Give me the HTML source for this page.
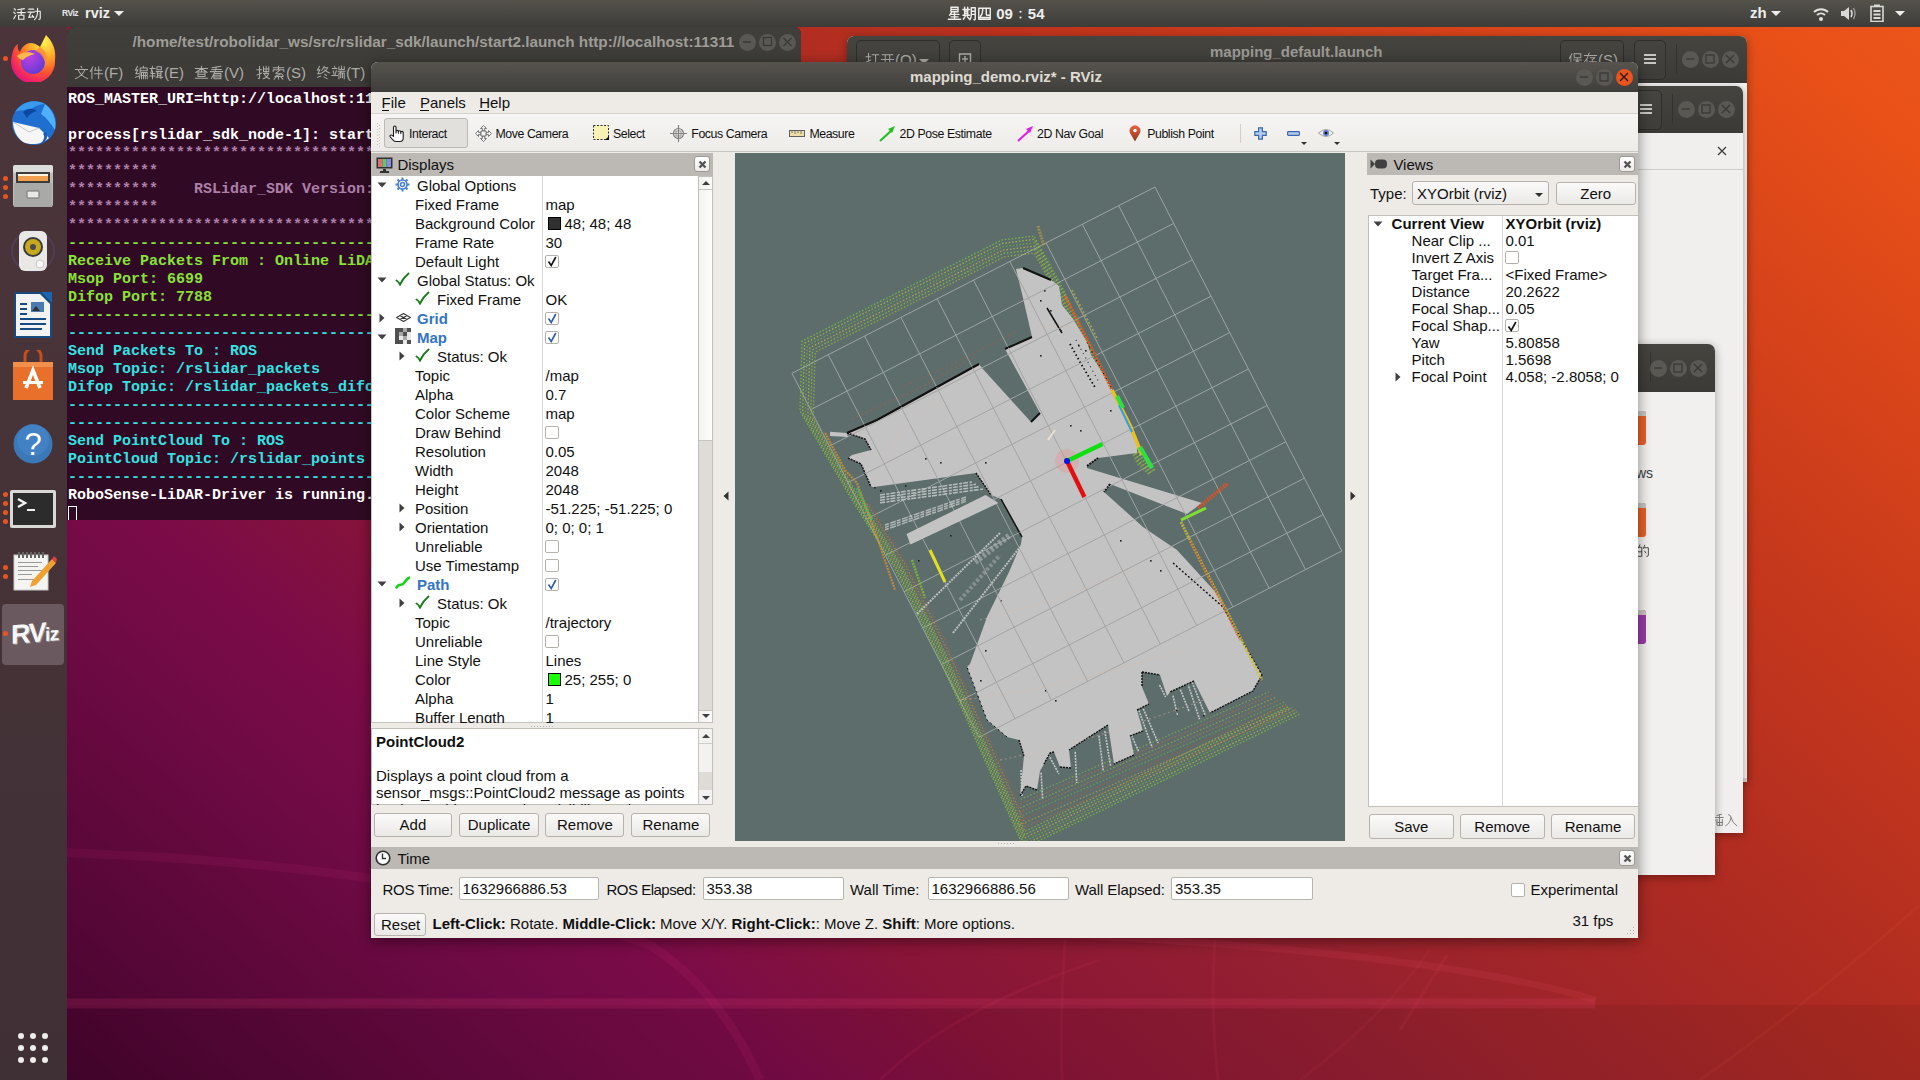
<!DOCTYPE html><html><head><meta charset="utf-8"><style>
*{margin:0;padding:0;box-sizing:border-box}
html,body{width:1920px;height:1080px;overflow:hidden}
body{position:relative;font-family:"Liberation Sans",sans-serif;color:#000;
background:#7a1040}
.a{position:absolute}
.t{position:absolute;white-space:pre;line-height:1}
.wp{position:absolute;left:0;top:0;width:1920px;height:1080px;
background:linear-gradient(41deg,#3e0428 0%,#4a0530 4%,#6e0a44 19%,#7a0b48 25%,#881438 33%,#952030 45%,#ac2a22 60%,#c6381c 75%,#d8441a 85%,#e85018 94%,#ec561a 100%)}
.topbar{position:absolute;left:0;top:0;width:1920px;height:27px;background:linear-gradient(#55524c,#3d3c38);color:#eeeeec;font-size:15px}
.dock{position:absolute;left:0;top:27px;width:67px;height:1053px;background:linear-gradient(#4b353a,#3f3035)}
.dot{position:absolute;width:5px;height:5px;border-radius:50%;background:#e95420}
.term{position:absolute;left:67px;top:27px;width:734px;height:493px;background:#300a24;border-radius:7px 7px 0 0;overflow:hidden}
.termhd{position:absolute;left:0;top:0;width:734px;height:60px;background:linear-gradient(#403f3b,#3b3a36)}
.tl{position:absolute;left:1px;font-family:"Liberation Mono",monospace;font-weight:bold;font-size:15px;line-height:18px;white-space:pre;height:18px}
.wbtn{position:absolute;width:17px;height:17px;border-radius:50%;background:#5a5853}

.bw{position:absolute;background:#f6f5f4;border-radius:7px 7px 0 0;overflow:hidden;box-shadow:0 2px 10px rgba(0,0,0,0.35)}
.bwhd{position:absolute;left:0;top:0;width:100%;background:linear-gradient(#45443f,#3b3a36)}
.gbtn{position:absolute;border:1px solid #2f2e2a;border-radius:5px;background:linear-gradient(#45443f,#3e3d39)}
.cbtn{position:absolute;width:17px;height:17px;border-radius:50%;background:#5a5853}
.rv{position:absolute;left:371px;top:62px;width:1267px;height:876px;background:#eeebe7;border-radius:7px 7px 0 0;overflow:hidden;box-shadow:0 3px 14px rgba(0,0,0,0.45)}
.rvtitle{position:absolute;left:0;top:0;width:1267px;height:30px;background:linear-gradient(#57544f,#3f3e3a)}
.ui{font-size:15px;color:#101010}

.pb{position:absolute;border:1px solid #b6b2ad;border-radius:3px;background:linear-gradient(#fbfaf9,#e9e7e4);font-size:15px;text-align:center;color:#101010}
.hdr{position:absolute;background:#bcb8b3}
.xb{position:absolute;width:17px;height:17px;border:1px solid #9d9994;border-radius:3px;background:linear-gradient(#ffffff,#ecebe9)}
.cb{position:absolute;width:14px;height:14px;border:1px solid #b4b0ab;border-radius:2px;background:#fff}
.sbbtn{position:absolute;background:linear-gradient(90deg,#f3f2f0,#fdfdfc)}
.inp{position:absolute;border:1px solid #b8b4af;border-radius:2px;background:#fff;font-size:15px;color:#101010}
</style></head><body>
<div class="wp"></div>
<div class="a" style="left:0;top:1005px;width:1920px;height:75px;background:rgba(0,0,0,0.07)"></div>
<svg class="a" style="left:0;top:0" width="1920" height="1080" viewBox="0 0 1920 1080"><path d="M67 1003.5 H1595" stroke="rgba(255,80,130,0.14)" stroke-width="10" fill="none"/><path d="M1000 932 Q1420 948 1596 1000" stroke="rgba(255,90,120,0.10)" stroke-width="7" fill="none"/><path d="M40 852 Q420 862 650 945 Q720 990 760 1080" stroke="rgba(255,60,150,0.08)" stroke-width="9" fill="none"/><path d="M1447 955 L1400 1030" stroke="rgba(255,90,120,0.08)" stroke-width="3" fill="none"/><path d="M1920 905 Q1800 1010 1700 1080" stroke="rgba(255,120,80,0.07)" stroke-width="3" fill="none"/><path d="M1065 940 Q1060 1010 1062 1080" stroke="rgba(255,90,120,0.07)" stroke-width="3" fill="none"/><path d="M1215 940 Q1210 1010 1218 1080" stroke="rgba(255,90,120,0.07)" stroke-width="3" fill="none"/><path d="M880 1080 Q950 1010 1100 960" stroke="rgba(255,90,120,0.07)" stroke-width="3" fill="none"/><path d="M1430 950 Q1380 1020 1300 1080" stroke="rgba(255,90,120,0.06)" stroke-width="3" fill="none"/></svg>
<div class="topbar">
<div class="t" style="left:12px;top:6px;font-size:15px"><svg width="15" height="15" viewBox="-0.5 -0.5 17 17" style="display:inline-block;vertical-align:-2.10px"><path d="M2 2.5 L3.5 4 M1.5 6.5 L3 8 M1.5 14 L3.8 10 M6 3.8 L13.5 2.5 M5.5 7 H14.5 M10 3 V9.5 M7 10 H13 V14.5 H7 Z" stroke="#eeeeec" stroke-width="1.3" fill="none" stroke-linecap="round" stroke-linejoin="round"/></svg><svg width="15" height="15" viewBox="-0.5 -0.5 17 17" style="display:inline-block;vertical-align:-2.10px"><path d="M1.5 3 H7 M0.5 6.5 H7.5 M4 6.5 L1.5 12.5 L7 11.5 M5.5 10 L7 12.5 M8.5 5.5 H14.5 V13 Q14.5 14.8 12.8 14.5 M11.5 2 V6 Q11.3 12 8 15" stroke="#eeeeec" stroke-width="1.3" fill="none" stroke-linecap="round" stroke-linejoin="round"/></svg></div>
<div class="t" style="left:62px;top:9px;font-size:8.5px;font-weight:bold;color:#e8e8e8;letter-spacing:-0.5px">RViz</div>
<div class="t" style="left:85px;top:6px;font-size:14.5px;font-weight:bold">rviz</div>
<div class="a" style="left:114px;top:11px;width:0;height:0;border-left:5px solid transparent;border-right:5px solid transparent;border-top:5px solid #eeeeec"></div>
<div class="t" style="left:947px;top:6px;font-size:15px;font-weight:bold"><svg width="15" height="15" viewBox="-0.5 -0.5 17 17" style="display:inline-block;vertical-align:-2.10px"><path d="M4 1 H12 V6 H4 Z M4 3.5 H12 M4.5 7 L2.5 10 M3.5 9 H13 M8 7 V14.5 M4 11.8 H12 M1 14.5 H15" stroke="#eeeeec" stroke-width="1.6" fill="none" stroke-linecap="round" stroke-linejoin="round"/></svg><svg width="15" height="15" viewBox="-0.5 -0.5 17 17" style="display:inline-block;vertical-align:-2.10px"><path d="M0.5 3.5 H8 M2.5 1 V10 M6 1 V10 M2.5 5.5 H6 M2.5 7.8 H6 M0.5 10 H8 M3 11.5 L1 14.5 M5.5 11.5 L7.5 14 M10 1.5 H14.5 V14 Q14.5 15.5 13 15 M10 1.5 V9 Q10 13 8.5 15 M10 5.5 H14.5 M10 9 H14.5" stroke="#eeeeec" stroke-width="1.6" fill="none" stroke-linecap="round" stroke-linejoin="round"/></svg><svg width="15" height="15" viewBox="-0.5 -0.5 17 17" style="display:inline-block;vertical-align:-2.10px"><path d="M1.5 2 H14.5 V14.5 H1.5 Z M6 2 Q6 9 3.5 11 M10 2 V9 Q10 10 11.5 10 H14.5 M1.5 12.5 H14.5" stroke="#eeeeec" stroke-width="1.6" fill="none" stroke-linecap="round" stroke-linejoin="round"/></svg> 09<svg width="15" height="15" viewBox="-0.5 -0.5 17 17" style="display:inline-block;vertical-align:-2.10px"><circle cx="8" cy="6" r="1.2" fill="#eeeeec"/><circle cx="8" cy="12.5" r="1.2" fill="#eeeeec"/></svg>54</div>
<div class="t" style="left:1750px;top:5px;font-size:15px;font-weight:bold">zh</div>
<div class="a" style="left:1771px;top:11px;width:0;height:0;border-left:5px solid transparent;border-right:5px solid transparent;border-top:5px solid #eeeeec"></div>
<svg class="a" style="left:1813px;top:6px" width="16" height="16" viewBox="0 0 16 16"><path d="M1 6 A10 10 0 0 1 15 6" stroke="#e0e0de" stroke-width="2" fill="none"/><path d="M4 9 A6 6 0 0 1 12 9" stroke="#e0e0de" stroke-width="2" fill="none"/><circle cx="8" cy="13" r="2" fill="#e0e0de"/></svg>
<svg class="a" style="left:1840px;top:6px" width="17" height="15" viewBox="0 0 17 15"><path d="M1 5h3l5-4v13l-5-4H1z" fill="#d8d8d6"/><path d="M11 4 Q13 7.5 11 11" stroke="#d8d8d6" stroke-width="1.6" fill="none"/><path d="M13.5 2 Q16.5 7.5 13.5 13" stroke="#9a9a98" stroke-width="1.4" fill="none"/></svg>
<svg class="a" style="left:1870px;top:4px" width="14" height="18" viewBox="0 0 14 18"><rect x="4" y="0.5" width="6" height="2" fill="#d8d8d6"/><rect x="1" y="2.5" width="12" height="15" fill="none" stroke="#d8d8d6" stroke-width="1.6"/><rect x="3.5" y="6" width="7" height="2" fill="#d8d8d6"/><rect x="3.5" y="9.5" width="7" height="2" fill="#d8d8d6"/><rect x="3.5" y="13" width="7" height="2" fill="#d8d8d6"/></svg>
<div class="a" style="left:1895px;top:11px;width:0;height:0;border-left:5px solid transparent;border-right:5px solid transparent;border-top:5px solid #eeeeec"></div>
</div>
<div class="dock"></div>
<svg class="a" style="left:9px;top:34px" width="48" height="48" viewBox="0 0 48 48">
<defs><radialGradient id="ffo" cx="0.75" cy="0.15" r="1"><stop offset="0" stop-color="#fff44f"/><stop offset="0.3" stop-color="#ffb02a"/><stop offset="0.6" stop-color="#ff5a2a"/><stop offset="0.85" stop-color="#f0206a"/><stop offset="1" stop-color="#d01a8a"/></radialGradient>
<radialGradient id="ffp" cx="0.35" cy="0.3" r="0.8"><stop offset="0" stop-color="#c040e0"/><stop offset="1" stop-color="#5a3bd6"/></radialGradient></defs>
<path d="M37 1 C45 9 47 17 46 26 A22 22 0 1 1 3 21 C4 15 6 12 9 10 C8 14 9 16 11 18 C13 12 18 9 22 9 C26 9 30 12 31 13 C33 9 35 5 37 1 Z" fill="url(#ffo)"/>
<circle cx="24" cy="28" r="12" fill="url(#ffp)"/>
<path d="M8 22 C12 18 20 17 26 20 C22 21 18 22 14 26 C11 25 9 24 8 22Z" fill="#ffb84a"/>
<path d="M31 13 C38 17 40 25 37 32 C35 24 32 19 26 17Z" fill="#ff8a3a" opacity="0.8"/>
</svg>
<svg class="a" style="left:9px;top:98px" width="48" height="49" viewBox="0 0 48 49">
<circle cx="25" cy="25" r="22" fill="#1f6fd0"/>
<path d="M6 14 C12 4 26 0 36 6 C30 6 24 9 20 13 C16 12 10 12 6 14Z" fill="#3a9af0"/>
<path d="M36 6 C44 12 48 22 46 32 C42 26 38 20 32 16Z" fill="#50b0ff"/>
<path d="M14 14 C18 10 24 10 28 13 C24 14 20 16 18 20Z" fill="#0a4aa0"/>
<path d="M4 24 L30 30 L40 40 C34 46 22 48 14 44 C8 40 4 32 4 24Z" fill="#f6f6f6"/>
<path d="M4 24 L20 34 L30 30" stroke="#c8c8c8" stroke-width="1" fill="none"/>
<path d="M36 34 C40 38 38 44 30 47 C36 42 36 38 34 36Z" fill="#1a5ab8"/>
</svg>
<svg class="a" style="left:12px;top:164px" width="42" height="44" viewBox="0 0 42 44">
<rect x="1" y="1" width="40" height="42" rx="3" fill="#bdbdbb"/><rect x="1" y="1" width="40" height="8" rx="2" fill="#dcdcda"/>
<rect x="4" y="8" width="34" height="11" fill="#3c3c3a"/><rect x="6" y="10" width="30" height="7" fill="#f0a050"/><rect x="6" y="10" width="30" height="2" fill="#fff2dc"/>
<rect x="2" y="19" width="38" height="24" fill="#a9a9a7"/><rect x="15" y="27" width="12" height="7" rx="1" fill="#e8e8e6" stroke="#707070" stroke-width="1"/>
</svg>
<svg class="a" style="left:10px;top:228px" width="46" height="46" viewBox="0 0 46 46">
<ellipse cx="23" cy="23" rx="21" ry="20" fill="none" stroke="#55456a" stroke-width="2" opacity="0.6"/>
<rect x="9" y="3" width="28" height="40" rx="6" fill="#e8e8e6"/><circle cx="23" cy="19" r="10" fill="#3a3a3a"/><circle cx="23" cy="19" r="8" fill="#c8a820"/><circle cx="23" cy="19" r="3" fill="#4a4a4a"/>
<circle cx="30" cy="36" r="4" fill="#f8f8f8" stroke="#c8c8c8"/>
</svg>
<svg class="a" style="left:13px;top:291px" width="40" height="48" viewBox="0 0 40 48">
<path d="M1 1 H28 L39 12 V47 H1 Z" fill="#174a7e"/><path d="M3 3 H27 L37 13 V45 H3 Z" fill="#f2f2f2"/><path d="M28 1 L39 1 L39 12 Z" fill="#1a65b0"/>
<rect x="7" y="12" width="7" height="2" fill="#174a7e"/><rect x="7" y="17" width="7" height="2" fill="#174a7e"/><rect x="7" y="22" width="7" height="2" fill="#174a7e"/>
<rect x="18" y="11" width="13" height="10" fill="#4a7ab0"/><path d="M19 20 L23 15 L27 20Z" fill="#333"/>
<rect x="7" y="27" width="26" height="2" fill="#174a7e"/><rect x="7" y="32" width="26" height="2" fill="#174a7e"/><rect x="7" y="37" width="22" height="2" fill="#174a7e"/>
</svg>
<svg class="a" style="left:12px;top:350px" width="42" height="51" viewBox="0 0 42 51">
<path d="M13 12 V6 A8 8 0 0 1 29 6 V12" stroke="#c84f1a" stroke-width="3" fill="none"/>
<rect x="1" y="12" width="40" height="38" fill="#e8702a"/><rect x="1" y="12" width="40" height="5" fill="#f0904a"/>
<path d="M14 38 L21 20 L28 38" stroke="#fff" stroke-width="3.5" fill="none"/><rect x="11" y="31" width="20" height="3" fill="#fff"/>
</svg>
<svg class="a" style="left:13px;top:424px" width="40" height="40" viewBox="0 0 40 40">
<circle cx="20" cy="20" r="19.5" fill="#3a78b8"/><circle cx="20" cy="16" r="16" fill="#4a8ad0" opacity="0.5"/>
<text x="20" y="31" text-anchor="middle" font-family="Liberation Sans" font-size="31" fill="#fff">?</text>
</svg>
<svg class="a" style="left:10px;top:490px" width="46" height="38" viewBox="0 0 46 38">
<rect x="0" y="0" width="46" height="38" rx="2" fill="#d8d8d6"/><rect x="3" y="3" width="40" height="32" fill="#2c2c2c"/>
<path d="M8 9 L15 13 L8 17" stroke="#f0f0f0" stroke-width="2.5" fill="none"/><rect x="17" y="19" width="8" height="2" fill="#f0f0f0"/>
</svg>
<svg class="a" style="left:12px;top:551px" width="46" height="40" viewBox="0 0 46 40">
<rect x="2" y="4" width="34" height="35" fill="#f4f4f2" stroke="#c8c8c6"/>
<g fill="#666"><rect x="6" y="1" width="2" height="6"/><rect x="10" y="1" width="2" height="6"/><rect x="14" y="1" width="2" height="6"/><rect x="18" y="1" width="2" height="6"/><rect x="22" y="1" width="2" height="6"/><rect x="26" y="1" width="2" height="6"/><rect x="30" y="1" width="2" height="6"/></g>
<g fill="#9a9a9a"><rect x="6" y="11" width="24" height="1"/><rect x="6" y="15" width="20" height="1"/><rect x="6" y="19" width="24" height="1"/><rect x="6" y="23" width="14" height="1"/><rect x="6" y="28" width="18" height="1"/></g>
<path d="M20 30 L40 8 L44 12 L24 34 L18 36Z" fill="#f0a030"/><path d="M40 8 L44 12 L45 8 L42 5Z" fill="#e04040"/>
</svg>
<div class="a" style="left:2px;top:604px;width:62px;height:61px;border-radius:4px;background:#6a5a60"></div>
<div class="t" style="left:11px;top:620px;font-size:27px;font-weight:bold;color:#f6f6f6;letter-spacing:-1.5px;text-shadow:1px 1px 0 #9a9a9a;transform:skewY(-5deg)">RV<span style="font-size:19px;letter-spacing:-0.5px">iz</span></div>
<div class="dot" style="left:3px;top:56px"></div>
<div class="dot" style="left:3px;top:176px"></div>
<div class="dot" style="left:3px;top:185px"></div>
<div class="dot" style="left:3px;top:194px"></div>
<div class="dot" style="left:3px;top:492px"></div>
<div class="dot" style="left:3px;top:501px"></div>
<div class="dot" style="left:3px;top:510px"></div>
<div class="dot" style="left:3px;top:519px"></div>
<div class="dot" style="left:3px;top:565px"></div>
<div class="dot" style="left:3px;top:574px"></div>
<div class="dot" style="left:3px;top:631px"></div>
<div class="a" style="left:17.75px;top:1032.75px;width:6.5px;height:6.5px;border-radius:50%;background:#eeeeec"></div>
<div class="a" style="left:29.75px;top:1032.75px;width:6.5px;height:6.5px;border-radius:50%;background:#eeeeec"></div>
<div class="a" style="left:41.75px;top:1032.75px;width:6.5px;height:6.5px;border-radius:50%;background:#eeeeec"></div>
<div class="a" style="left:17.75px;top:1044.75px;width:6.5px;height:6.5px;border-radius:50%;background:#eeeeec"></div>
<div class="a" style="left:29.75px;top:1044.75px;width:6.5px;height:6.5px;border-radius:50%;background:#eeeeec"></div>
<div class="a" style="left:41.75px;top:1044.75px;width:6.5px;height:6.5px;border-radius:50%;background:#eeeeec"></div>
<div class="a" style="left:17.75px;top:1056.75px;width:6.5px;height:6.5px;border-radius:50%;background:#eeeeec"></div>
<div class="a" style="left:29.75px;top:1056.75px;width:6.5px;height:6.5px;border-radius:50%;background:#eeeeec"></div>
<div class="a" style="left:41.75px;top:1056.75px;width:6.5px;height:6.5px;border-radius:50%;background:#eeeeec"></div>
<div class="term">
<div class="termhd"></div>
<div class="t" style="left:65.5px;top:7px;font-size:15.3px;font-weight:bold;color:#9e9c96">/home/test/robolidar_ws/src/rslidar_sdk/launch/start2.launch http://localhost:11311</div>
<div class="wbtn" style="left:671.5px;top:6.5px"></div>
<div class="wbtn" style="left:691.5px;top:6.5px"></div>
<div class="wbtn" style="left:711.5px;top:6.5px"></div>
<svg class="a" style="left:671px;top:6px" width="60" height="18"><path d="M5 9h8" stroke="#3a3935" stroke-width="1.3"/><rect x="25.5" y="4.5" width="8" height="8" fill="none" stroke="#3a3935" stroke-width="1.3"/><path d="M45.5 5l8 8M53.5 5l-8 8" stroke="#3a3935" stroke-width="1.3"/></svg>
<div class="t" style="left:7px;top:38px;font-size:15px;color:#aeaca6"><svg width="15" height="15" viewBox="-0.5 -0.5 17 17" style="display:inline-block;vertical-align:-2.10px"><path d="M7.5 1 L8.5 3 M1 4.5 H15 M4 4.5 Q7 12 15 15 M12 4.5 Q9 12 1 15" stroke="#aeaca6" stroke-width="1.15" fill="none" stroke-linecap="round" stroke-linejoin="round"/></svg><svg width="15" height="15" viewBox="-0.5 -0.5 17 17" style="display:inline-block;vertical-align:-2.10px"><path d="M4 1.5 L1 7 M2.8 4.5 V15 M7 2.5 L6 6 M6.5 5.5 H14 M5.5 9.5 H15 M10.5 1.5 V15" stroke="#aeaca6" stroke-width="1.15" fill="none" stroke-linecap="round" stroke-linejoin="round"/></svg>(F)</div>
<div class="t" style="left:67px;top:38px;font-size:15px;color:#aeaca6"><svg width="15" height="15" viewBox="-0.5 -0.5 17 17" style="display:inline-block;vertical-align:-2.10px"><path d="M3.5 1 L1 5.5 L4 5 L1.5 9.5 L5 9 M1 13.5 L5 12 M10 1 L10.5 2 M6.5 3 H14.5 V6 H6.5 M6.5 3 V8 Q6.5 13 5.5 15 M8 8 H14.5 V15 M8 8 V15 M10.2 8 V15 M12.3 8 V15 M8 11.5 H14.5" stroke="#aeaca6" stroke-width="1.15" fill="none" stroke-linecap="round" stroke-linejoin="round"/></svg><svg width="15" height="15" viewBox="-0.5 -0.5 17 17" style="display:inline-block;vertical-align:-2.10px"><path d="M0.5 3.5 H6.5 M3.5 1 L1.5 9 H6.5 M3.5 6 V15 M0.5 12 H6.5 M8.5 1.5 H13.5 V5 H8.5 Z M7.5 7 H15 M9 7 V13.5 M13 7 V15 M9 9.5 H13 M9 11.5 H13 M7.5 13.5 H15" stroke="#aeaca6" stroke-width="1.15" fill="none" stroke-linecap="round" stroke-linejoin="round"/></svg>(E)</div>
<div class="t" style="left:127px;top:38px;font-size:15px;color:#aeaca6"><svg width="15" height="15" viewBox="-0.5 -0.5 17 17" style="display:inline-block;vertical-align:-2.10px"><path d="M1 3.5 H15 M8 1 V7.5 M8 3.5 L1.5 8 M8 3.5 L14.5 8 M4 7.5 H12 V12.5 H4 Z M4 10 H12 M1 14.5 H15" stroke="#aeaca6" stroke-width="1.15" fill="none" stroke-linecap="round" stroke-linejoin="round"/></svg><svg width="15" height="15" viewBox="-0.5 -0.5 17 17" style="display:inline-block;vertical-align:-2.10px"><path d="M13 1 L3 2.5 M2.5 4.5 H13.5 M1 7 H15 M8 2 Q6 9 2 15 M5 9 H13 V15 H5 Z M5 11 H13 M5 13 H13" stroke="#aeaca6" stroke-width="1.15" fill="none" stroke-linecap="round" stroke-linejoin="round"/></svg>(V)</div>
<div class="t" style="left:189px;top:38px;font-size:15px;color:#aeaca6"><svg width="15" height="15" viewBox="-0.5 -0.5 17 17" style="display:inline-block;vertical-align:-2.10px"><path d="M0.5 5 H6 M3.5 1 V14 Q3.5 15.3 2 14.5 M0.5 11 L6 8.5 M8 1.5 V7 H14 V1.5 M8 4 H14 M11 1 V8 M8 9 H14 Q12 14 7.5 15 M9 10 Q11 14 15 15" stroke="#aeaca6" stroke-width="1.15" fill="none" stroke-linecap="round" stroke-linejoin="round"/></svg><svg width="15" height="15" viewBox="-0.5 -0.5 17 17" style="display:inline-block;vertical-align:-2.10px"><path d="M2 2.5 H14 M8 0.5 V5 M2 7 V5 H14 V7 M9 5.5 L5 9 L11 9.5 L4 12.5 H13 M12 10 L13.5 12 M8 12.5 V15.5 M5 13.5 L3 15.5 M11 13.5 L13 15.5" stroke="#aeaca6" stroke-width="1.15" fill="none" stroke-linecap="round" stroke-linejoin="round"/></svg>(S)</div>
<div class="t" style="left:249px;top:38px;font-size:15px;color:#aeaca6"><svg width="15" height="15" viewBox="-0.5 -0.5 17 17" style="display:inline-block;vertical-align:-2.10px"><path d="M3.5 1 L1 5.5 L4 5 L1.5 9.5 L5 9 M1 13.5 L5 12 M9 1 L6 5.5 M8.5 2.5 H13 Q11 6.5 6 8.5 M9.5 5 Q12 7.5 15 8.5 M9.5 10 L11.5 11.5 M8.5 13 L12 15" stroke="#aeaca6" stroke-width="1.15" fill="none" stroke-linecap="round" stroke-linejoin="round"/></svg><svg width="15" height="15" viewBox="-0.5 -0.5 17 17" style="display:inline-block;vertical-align:-2.10px"><path d="M3.5 1 L4 2.5 M1 3.5 H6.5 M2 6 L3 10 M5.5 5.5 L4.5 10 M0.5 11.5 H7 M8.5 1.5 V4.5 H14.5 V1.5 M11.5 0.5 V4.5 M7.5 6.5 H15.5 M11 6.5 L10 8.5 M8.5 8.5 V15 M8.5 8.5 H14.5 V15 M10.5 8.5 V14 M12.5 8.5 V14" stroke="#aeaca6" stroke-width="1.15" fill="none" stroke-linecap="round" stroke-linejoin="round"/></svg>(T)</div>
<div class="tl" style="top:64px"><span style="color:#ffffff">ROS_MASTER_URI=http://localhost:11311</span></div>
<div class="tl" style="top:82px"></div>
<div class="tl" style="top:100px"><span style="color:#ffffff">process[rslidar_sdk_node-1]: started with pid [8612]</span></div>
<div class="tl" style="top:118px"><span style="color:#ad7fa8">********************************************************************************</span></div>
<div class="tl" style="top:136px"><span style="color:#ad7fa8">**********</span></div>
<div class="tl" style="top:154px"><span style="color:#ad7fa8">**********    RSLidar_SDK Version: v1.3.0</span></div>
<div class="tl" style="top:172px"><span style="color:#ad7fa8">**********</span></div>
<div class="tl" style="top:190px"><span style="color:#ad7fa8">********************************************************************************</span></div>
<div class="tl" style="top:208px"><span style="color:#8ae234">--------------------------------------------------------------------------------</span></div>
<div class="tl" style="top:226px"><span style="color:#8ae234">Receive Packets From : Online LiDAR</span></div>
<div class="tl" style="top:244px"><span style="color:#8ae234">Msop Port: 6699</span></div>
<div class="tl" style="top:262px"><span style="color:#8ae234">Difop Port: 7788</span></div>
<div class="tl" style="top:280px"><span style="color:#8ae234">--------------------------------------------------------------------------------</span></div>
<div class="tl" style="top:298px"><span style="color:#34e2e2">--------------------------------------------------------------------------------</span></div>
<div class="tl" style="top:316px"><span style="color:#34e2e2">Send Packets To : ROS</span></div>
<div class="tl" style="top:334px"><span style="color:#34e2e2">Msop Topic: /rslidar_packets</span></div>
<div class="tl" style="top:352px"><span style="color:#34e2e2">Difop Topic: /rslidar_packets_difop</span></div>
<div class="tl" style="top:370px"><span style="color:#34e2e2">--------------------------------------------------------------------------------</span></div>
<div class="tl" style="top:388px"><span style="color:#34e2e2">--------------------------------------------------------------------------------</span></div>
<div class="tl" style="top:406px"><span style="color:#34e2e2">Send PointCloud To : ROS</span></div>
<div class="tl" style="top:424px"><span style="color:#34e2e2">PointCloud Topic: /rslidar_points</span></div>
<div class="tl" style="top:442px"><span style="color:#34e2e2">--------------------------------------------------------------------------------</span></div>
<div class="tl" style="top:460px"><span style="color:#ffffff">RoboSense-LiDAR-Driver is running.</span></div>
<div class="a" style="left:1px;top:479px;width:9px;height:18px;border:1px solid #fff"></div>
</div>
<div class="bw" style="left:847px;top:36px;width:900px;height:746px">
<div class="bwhd" style="height:47px"></div>
<div class="gbtn" style="left:9px;top:4px;width:84px;height:40px"></div>
<div class="t" style="left:18px;top:16px;font-size:15px;color:#aeaca6"><svg width="15" height="15" viewBox="-0.5 -0.5 17 17" style="display:inline-block;vertical-align:-2.10px"><path d="M0.5 5 H6 M3.5 1 V14 Q3.5 15.3 2 14.5 M0.5 11 L6 8.5 M7.5 2.5 H15 M11.5 2.5 V14 Q11.5 15.5 9.5 14.5" stroke="#aeaca6" stroke-width="1.15" fill="none" stroke-linecap="round" stroke-linejoin="round"/></svg><svg width="15" height="15" viewBox="-0.5 -0.5 17 17" style="display:inline-block;vertical-align:-2.10px"><path d="M2 2.5 H14 M1 8 H15 M5.5 2.5 V8 Q5.5 13 2 15 M10.5 2.5 V15" stroke="#aeaca6" stroke-width="1.15" fill="none" stroke-linecap="round" stroke-linejoin="round"/></svg>(O)</div>
<div class="gbtn" style="left:102px;top:4px;width:32px;height:40px"></div>
<div class="a" style="left:72px;top:23px;width:0;height:0;border-left:5px solid transparent;border-right:5px solid transparent;border-top:5px solid #aeaca6"></div>
<svg class="a" style="left:111px;top:16px" width="14" height="12"><path d="M1.5 11 V2 H12.5 V11" stroke="#aeaca6" stroke-width="1.4" fill="none"/><path d="M7 4 V10 M4 7 H10" stroke="#aeaca6" stroke-width="1.4"/></svg>
<div class="t" style="left:363px;top:8px;font-size:15px;font-weight:bold;color:#9c9a94">mapping_default.launch</div>
<div class="gbtn" style="left:713px;top:4px;width:64px;height:40px"></div>
<div class="t" style="left:721px;top:16px;font-size:15px;color:#aeaca6"><svg width="15" height="15" viewBox="-0.5 -0.5 17 17" style="display:inline-block;vertical-align:-2.10px"><path d="M4 1.5 L1 7 M2.8 4.5 V15 M6.5 1.5 H14 V6 H6.5 Z M5.5 8.5 H15 M10 6 V15.5 M10 9 L5.5 14 M10 9 L15 14" stroke="#aeaca6" stroke-width="1.15" fill="none" stroke-linecap="round" stroke-linejoin="round"/></svg><svg width="15" height="15" viewBox="-0.5 -0.5 17 17" style="display:inline-block;vertical-align:-2.10px"><path d="M1 3.5 H15 M6.5 0.5 Q5 7 1 11 M4 7.5 V15.5 M7.5 6 H13 L10 8.5 V14 Q10 15.5 8.5 15 M6.5 10.5 H15" stroke="#aeaca6" stroke-width="1.15" fill="none" stroke-linecap="round" stroke-linejoin="round"/></svg>(S)</div>
<div class="gbtn" style="left:787px;top:4px;width:32px;height:40px"></div>
<svg class="a" style="left:797px;top:17px" width="12" height="12"><rect y="1" width="12" height="2" fill="#c8c6c0"/><rect y="5" width="12" height="2" fill="#c8c6c0"/><rect y="9" width="12" height="2" fill="#c8c6c0"/></svg>
<div class="a" style="left:829px;top:8px;width:1px;height:30px;background:#33322e"></div>
<div class="a" style="left:0;top:742px;width:100%;height:4px;background:#d8d6d2"></div>
</div>
<div class="cbtn" style="left:1681.5px;top:50.5px;background:#5a5853"></div>
<div class="cbtn" style="left:1701.5px;top:50.5px;background:#5a5853"></div>
<div class="cbtn" style="left:1721.5px;top:50.5px;background:#5a5853"></div>
<svg class="a" style="left:1680px;top:50px" width="60" height="18"><path d="M6 9h8" stroke="#3a3935" stroke-width="1.3"/><rect x="26" y="5" width="8" height="8" fill="none" stroke="#3a3935" stroke-width="1.3"/><path d="M46 5l8 8M54 5l-8 8" stroke="#3a3935" stroke-width="1.4"/></svg>
<div class="bw" style="left:1290px;top:86px;width:453px;height:747px;background:#f0efee">
<div class="bwhd" style="height:47px"></div>
<div class="gbtn" style="left:340px;top:4px;width:32px;height:40px"></div>
<svg class="a" style="left:350px;top:17px" width="12" height="12"><rect y="1" width="12" height="2" fill="#c8c6c0"/><rect y="5" width="12" height="2" fill="#c8c6c0"/><rect y="9" width="12" height="2" fill="#c8c6c0"/></svg>
<div class="a" style="left:382px;top:8px;width:1px;height:30px;background:#33322e"></div>
<div class="a" style="left:0;top:83px;width:100%;height:1px;background:#cfcdca"></div>
<svg class="a" style="left:427px;top:60px" width="10" height="10"><path d="M1 1l8 8M9 1l-8 8" stroke="#3c3c3c" stroke-width="1.3"/></svg>
<div class="t" style="left:420px;top:727px;font-size:14px;color:#777"><svg width="14" height="14" viewBox="-0.5 -0.5 17 17" style="display:inline-block;vertical-align:-1.96px"><path d="M0.5 5 H6 M3.5 1 V14 Q3.5 15.3 2 14.5 M0.5 11 L6 8.5 M13.5 1 L8 2.5 M7 5 H15.5 M11 2 V15 M8 7.5 V14.5 H14.5 V7.5 M8 11 H10.5 M11.5 11 H14.5" stroke="#777" stroke-width="1.1" fill="none" stroke-linecap="round" stroke-linejoin="round"/></svg><svg width="14" height="14" viewBox="-0.5 -0.5 17 17" style="display:inline-block;vertical-align:-1.96px"><path d="M5 1.5 Q8 2 8 5 Q7 12 1.5 15 M8 5 Q10 12 15 15" stroke="#777" stroke-width="1.1" fill="none" stroke-linecap="round" stroke-linejoin="round"/></svg></div>
</div>
<div class="cbtn" style="left:1677.5px;top:100.5px;background:#5a5853"></div>
<div class="cbtn" style="left:1697.5px;top:100.5px;background:#5a5853"></div>
<div class="cbtn" style="left:1717.5px;top:100.5px;background:#5a5853"></div>
<svg class="a" style="left:1676px;top:100px" width="60" height="18"><path d="M6 9h8" stroke="#3a3935" stroke-width="1.3"/><rect x="26" y="5" width="8" height="8" fill="none" stroke="#3a3935" stroke-width="1.3"/><path d="M46 5l8 8M54 5l-8 8" stroke="#3a3935" stroke-width="1.4"/></svg>
<div class="bw" style="left:1300px;top:344px;width:415px;height:531px;background:#f1f0ef">
<div class="bwhd" style="height:48px"></div>
<div class="a" style="left:350px;top:8px;width:1px;height:30px;background:#33322e"></div>
<div class="a" style="left:310px;top:67px;width:36px;height:34px;border-radius:3px;background:#e8602a"></div>
<div class="a" style="left:310px;top:67px;width:36px;height:5px;border-radius:3px 3px 0 0;background:#c8c6c0"></div>
<div class="a" style="left:310px;top:159px;width:36px;height:34px;border-radius:3px;background:#e8602a"></div>
<div class="a" style="left:310px;top:159px;width:36px;height:5px;border-radius:3px 3px 0 0;background:#c8c6c0"></div>
<div class="a" style="left:310px;top:266px;width:36px;height:34px;border-radius:3px;background:#9a3aa8"></div>
<div class="a" style="left:310px;top:266px;width:36px;height:5px;border-radius:3px 3px 0 0;background:#c8c6c0"></div>
<div class="t" style="left:336px;top:122px;font-size:14px;color:#3c3c3c">ws</div>
<div class="t" style="left:336px;top:200px;font-size:14px;color:#3c3c3c"><svg width="14" height="14" viewBox="-0.5 -0.5 17 17" style="display:inline-block;vertical-align:-1.96px"><path d="M4.2 0.5 L3.2 3 M1.5 3.5 H6.5 V14.5 H1.5 Z M1.5 9 H6.5 M10 1 L8.5 5 M9.5 4 H14.5 V13 Q14.5 15.2 12.5 14.5 M10 8 L11.5 10.5" stroke="#3c3c3c" stroke-width="1.1" fill="none" stroke-linecap="round" stroke-linejoin="round"/></svg></div>
</div>
<div class="cbtn" style="left:1649.5px;top:359.5px;background:#5a5853"></div>
<div class="cbtn" style="left:1669.5px;top:359.5px;background:#5a5853"></div>
<div class="cbtn" style="left:1689.5px;top:359.5px;background:#5a5853"></div>
<svg class="a" style="left:1648px;top:359px" width="60" height="18"><path d="M6 9h8" stroke="#3a3935" stroke-width="1.3"/><rect x="26" y="5" width="8" height="8" fill="none" stroke="#3a3935" stroke-width="1.3"/><path d="M46 5l8 8M54 5l-8 8" stroke="#3a3935" stroke-width="1.4"/></svg>
<div class="rv">
<div class="rvtitle"></div>
<div class="t" style="left:539px;top:7px;font-size:15px;font-weight:bold;color:#dfdbd2">mapping_demo.rviz* - RViz</div>
<div class="a" style="left:0.0px;top:30.0px;width:1267.0px;height:21.0px;background:#eeebe7"></div>
<div class="a" style="left:0.0px;top:51.0px;width:1267.0px;height:1.0px;background:#d6d2cd"></div>
<div class="t" style="left:10.6px;top:33.3px;font-size:15px;color:#101010;">File</div>
<div class="t" style="left:49.0px;top:33.3px;font-size:15px;color:#101010;">Panels</div>
<div class="t" style="left:108.2px;top:33.3px;font-size:15px;color:#101010;">Help</div>
<div class="a" style="left:10.5px;top:48.0px;width:7.5px;height:1.0px;background:#101010"></div>
<div class="a" style="left:49.0px;top:48.0px;width:9.0px;height:1.0px;background:#101010"></div>
<div class="a" style="left:108.0px;top:48.0px;width:10.0px;height:1.0px;background:#101010"></div>
<div class="a" style="left:0.0px;top:52.0px;width:1267.0px;height:37.0px;background:linear-gradient(#f6f5f3,#eeece9)"></div>
<div class="a" style="left:0.0px;top:89.0px;width:1267.0px;height:1.0px;background:#c9c5c0"></div>
<div class="a" style="left:6.0px;top:61.0px;width:1.0px;height:1.0px;background:#c4c0bb"></div>
<div class="a" style="left:8.0px;top:62.5px;width:1.0px;height:1.0px;background:#c4c0bb"></div>
<div class="a" style="left:6.0px;top:64.0px;width:1.0px;height:1.0px;background:#c4c0bb"></div>
<div class="a" style="left:8.0px;top:65.5px;width:1.0px;height:1.0px;background:#c4c0bb"></div>
<div class="a" style="left:6.0px;top:67.0px;width:1.0px;height:1.0px;background:#c4c0bb"></div>
<div class="a" style="left:8.0px;top:68.5px;width:1.0px;height:1.0px;background:#c4c0bb"></div>
<div class="a" style="left:6.0px;top:70.0px;width:1.0px;height:1.0px;background:#c4c0bb"></div>
<div class="a" style="left:8.0px;top:71.5px;width:1.0px;height:1.0px;background:#c4c0bb"></div>
<div class="a" style="left:6.0px;top:73.0px;width:1.0px;height:1.0px;background:#c4c0bb"></div>
<div class="a" style="left:8.0px;top:74.5px;width:1.0px;height:1.0px;background:#c4c0bb"></div>
<div class="a" style="left:6.0px;top:76.0px;width:1.0px;height:1.0px;background:#c4c0bb"></div>
<div class="a" style="left:8.0px;top:77.5px;width:1.0px;height:1.0px;background:#c4c0bb"></div>
<div class="a" style="left:6.0px;top:79.0px;width:1.0px;height:1.0px;background:#c4c0bb"></div>
<div class="a" style="left:8.0px;top:80.5px;width:1.0px;height:1.0px;background:#c4c0bb"></div>
<div class="a" style="left:6.0px;top:82.0px;width:1.0px;height:1.0px;background:#c4c0bb"></div>
<div class="a" style="left:8.0px;top:83.5px;width:1.0px;height:1.0px;background:#c4c0bb"></div>
<div class="a" style="left:13.4px;top:56.4px;width:84.0px;height:29.8px;background:#e2e0dd;border:1px solid #bdb9b4;border-radius:3px"></div>
<div class="t" style="left:38.0px;top:65.7px;font-size:12.3px;color:#101010;letter-spacing:-0.4px;">Interact</div>
<div class="t" style="left:124.4px;top:65.7px;font-size:12.3px;color:#101010;letter-spacing:-0.4px;">Move Camera</div>
<div class="t" style="left:242.0px;top:65.7px;font-size:12.3px;color:#101010;letter-spacing:-0.4px;">Select</div>
<div class="t" style="left:320.3px;top:65.7px;font-size:12.3px;color:#101010;letter-spacing:-0.4px;">Focus Camera</div>
<div class="t" style="left:438.4px;top:65.7px;font-size:12.3px;color:#101010;letter-spacing:-0.4px;">Measure</div>
<div class="t" style="left:528.6px;top:65.7px;font-size:12.3px;color:#101010;letter-spacing:-0.4px;">2D Pose Estimate</div>
<div class="t" style="left:666.0px;top:65.7px;font-size:12.3px;color:#101010;letter-spacing:-0.4px;">2D Nav Goal</div>
<div class="t" style="left:776.2px;top:65.7px;font-size:12.3px;color:#101010;letter-spacing:-0.4px;">Publish Point</div>
<svg class="a" style="left:17.5px;top:62.5px" width="17" height="18" viewBox="0 0 17 18"><path d="M4.5 11 V2.2 A1.25 1.25 0 0 1 7 2.2 V8 V6.6 A1.2 1.2 0 0 1 9.4 6.6 V8.2 V7 A1.2 1.2 0 0 1 11.8 7 V8.6 V7.6 A1.2 1.2 0 0 1 14.2 7.6 V13 Q14.2 16.5 11 16.5 H7 Q5 16.5 3.5 14.5 L1 11.5 Q0.8 10 2.2 10 Q3.2 10 4.5 11.5 Z" fill="#fff" stroke="#1a1a1a" stroke-width="1.1" stroke-linejoin="round"/></svg>
<svg class="a" style="left:104.0px;top:63.0px" width="17" height="17" viewBox="0 0 17 17"><g fill="#f2f2f2" stroke="#6a6a6a" stroke-width="0.9" stroke-linejoin="round"><path d="M8.5 0.5 L11.5 3.5 H9.6 V6 H7.4 V3.5 H5.5 Z"/><path d="M8.5 16.5 L11.5 13.5 H9.6 V11 H7.4 V13.5 H5.5 Z"/><path d="M0.5 8.5 L3.5 5.5 V7.4 H6 V9.6 H3.5 V11.5 Z"/><path d="M16.5 8.5 L13.5 5.5 V7.4 H11 V9.6 H13.5 V11.5 Z"/><rect x="6" y="6" width="5" height="5"/></g></svg>
<svg class="a" style="left:222.0px;top:63.0px" width="17" height="16" viewBox="0 0 17 16"><rect x="0.5" y="0.5" width="15" height="14" fill="#f8f2b4" stroke="#303030" stroke-dasharray="2,1.5"/><path d="M12 15 L16 11 V15Z" fill="#101010"/></svg>
<svg class="a" style="left:299.0px;top:63.0px" width="17" height="17" viewBox="0 0 17 17"><g stroke="#808080" fill="none" stroke-width="1.2"><circle cx="8.5" cy="8.5" r="5"/><path d="M8.5 0 V17 M0 8.5 H17"/><path d="M6 6 h5 v5 h-5z" stroke-width="0.8"/></g></svg>
<svg class="a" style="left:418.0px;top:68.0px" width="16" height="7" viewBox="0 0 16 7"><rect x="0.5" y="0.5" width="15" height="6" fill="#ecdca8" stroke="#606060"/><path d="M3 1v2M6 1v3M9 1v2M12 1v3" stroke="#606060" stroke-width="0.8"/></svg>
<svg class="a" style="left:508.0px;top:63.0px" width="17" height="17" viewBox="0 0 17 17"><path d="M1 16 L13 5" stroke="#20c020" stroke-width="2.2"/><path d="M16 1 L9 4 L13 8Z" fill="#20c020"/></svg>
<svg class="a" style="left:646.0px;top:63.0px" width="17" height="17" viewBox="0 0 17 17"><path d="M1 16 L13 5" stroke="#e020e0" stroke-width="2.2"/><path d="M16 1 L9 4 L13 8Z" fill="#e020e0"/></svg>
<svg class="a" style="left:758.0px;top:63.0px" width="12" height="17" viewBox="0 0 12 17"><defs><linearGradient id="pp" x1="0" y1="0" x2="0" y2="1"><stop offset="0" stop-color="#f06040"/><stop offset="1" stop-color="#8a3818"/></linearGradient></defs><path d="M6 16.5 C3 11 0.5 8.5 0.5 5.8 A5.5 5.5 0 0 1 11.5 5.8 C11.5 8.5 9 11 6 16.5Z" fill="url(#pp)"/><circle cx="6" cy="5.5" r="1.7" fill="#fff"/></svg>
<div class="a" style="left:869.0px;top:62.0px;width:1.0px;height:19.0px;background:#d2cec9"></div>
<svg class="a" style="left:883.0px;top:64.5px" width="13" height="13" viewBox="0 0 13 13"><path d="M4.6 0.8 H8.4 V4.6 H12.2 V8.4 H8.4 V12.2 H4.6 V8.4 H0.8 V4.6 H4.6 Z" fill="#b4ccec" stroke="#3a68b0" stroke-width="1.2"/></svg>
<svg class="a" style="left:915.5px;top:69.0px" width="13" height="5" viewBox="0 0 13 5"><rect x="0.6" y="0.6" width="11.8" height="3.8" rx="0.8" fill="#b4ccec" stroke="#3a68b0" stroke-width="1.2"/></svg>
<div class="a" style="left:930.0px;top:79.5px;width:0;height:0;border-left:3px solid transparent;border-right:3px solid transparent;border-top:3px solid #303030;"></div>
<svg class="a" style="left:947.0px;top:66.0px" width="16" height="10" viewBox="0 0 16 10"><path d="M0.5 5 Q8 -2 15.5 5 Q8 12 0.5 5Z" fill="#f2f2f2" stroke="#9a9a9a" stroke-width="0.9"/><circle cx="8" cy="5" r="3" fill="#5a7ad0"/><circle cx="8" cy="5" r="1.2" fill="#000"/></svg>
<div class="a" style="left:963.0px;top:79.5px;width:0;height:0;border-left:3px solid transparent;border-right:3px solid transparent;border-top:3px solid #303030;"></div>
<div class="a" style="left:0.0px;top:91.0px;width:342.0px;height:22.5px;background:#bcb8b3"></div>
<svg class="a" style="left:5.0px;top:95.0px" width="17" height="17" viewBox="0 0 17 17"><rect x="0.5" y="0.5" width="16" height="11" fill="#303030"/><rect x="2" y="2" width="4.3" height="8" fill="#d87070"/><rect x="6.3" y="2" width="4.3" height="8" fill="#70c070"/><rect x="10.6" y="2" width="4.4" height="8" fill="#8a8ae0"/><rect x="7" y="12" width="3" height="2" fill="#303030"/><rect x="4" y="14" width="9" height="2" fill="#303030"/></svg>
<div class="t" style="left:26.4px;top:95.4px;font-size:15px;color:#101010;">Displays</div>
<div class="a" style="left:322.6px;top:93.5px;width:16.4px;height:16.0px;border:1px solid #9d9994;border-radius:3px;background:linear-gradient(#ffffff,#ecebe9)"></div>
<svg class="a" style="left:326.5px;top:97.5px" width="9" height="9" viewBox="0 0 9 9"><path d="M1.5 1.5 L7.5 7.5 M7.5 1.5 L1.5 7.5" stroke="#555" stroke-width="2.4"/></svg>
<div class="a" style="left:0.0px;top:113.5px;width:327.0px;height:547.5px;background:#fff;border-left:1px solid #c8c4bf;border-bottom:1px solid #c8c4bf"></div>
<div class="a" style="left:170.5px;top:113.5px;width:1.0px;height:547.5px;background:#dcd9d5"></div>
<div class="a" style="left:327.0px;top:113.5px;width:15.0px;height:547.5px;background:#dfdcd8;border:1px solid #c2beb9"></div>
<div class="a" style="left:328.0px;top:114.5px;width:13.0px;height:13.0px;background:linear-gradient(90deg,#f2f1ef,#fcfcfb);border-bottom:1px solid #c8c4bf"></div>
<div class="a" style="left:330.5px;top:119.0px;width:0;height:0;border-left:4px solid transparent;border-right:4px solid transparent;border-bottom:4px solid #404040;"></div>
<div class="a" style="left:328.0px;top:127.5px;width:13.0px;height:251.5px;background:linear-gradient(90deg,#f4f3f1,#fdfdfc);border-bottom:1px solid #c8c4bf"></div>
<div class="a" style="left:328.0px;top:647.5px;width:13.0px;height:12.5px;background:linear-gradient(90deg,#f2f1ef,#fcfcfb);border-top:1px solid #c8c4bf"></div>
<div class="a" style="left:330.5px;top:652.0px;width:0;height:0;border-left:4px solid transparent;border-right:4px solid transparent;border-top:4px solid #404040;"></div>
<div class="a" style="left:1px;top:113.5px;width:326px;height:547px;overflow:hidden">
<svg class="a" style="left:5.0px;top:6.8px" width="10" height="6" viewBox="0 0 10 6"><path d="M0.5 0.5 H9.5 L5 5.5Z" fill="#404040"/></svg>
<svg class="a" style="left:23.0px;top:1.8px" width="15" height="15" viewBox="0 0 15 15"><g fill="none" stroke="#4a80d0" stroke-width="1.6"><circle cx="7.5" cy="7.5" r="4.5"/><circle cx="7.5" cy="7.5" r="2"/></g><g stroke="#4a80d0" stroke-width="2"><path d="M7.5 0.5v2.5M7.5 12v2.5M0.5 7.5h2.5M12 7.5h2.5M2.5 2.5l1.8 1.8M10.7 10.7l1.8 1.8M2.5 12.5l1.8-1.8M10.7 4.3l1.8-1.8"/></g></svg>
<div class="t" style="left:45.0px;top:2.2px;font-size:15px;color:#101010;">Global Options</div>
<div class="t" style="left:43.0px;top:21.2px;font-size:15px;color:#101010;">Fixed Frame</div>
<div class="t" style="left:173.5px;top:21.2px;font-size:15px;color:#101010;">map</div>
<div class="t" style="left:43.0px;top:40.2px;font-size:15px;color:#101010;">Background Color</div>
<div class="a" style="left:176.0px;top:41.3px;width:12.5px;height:13.0px;background:#303030;border:1px solid #000"></div>
<div class="t" style="left:192.5px;top:40.2px;font-size:15px;color:#101010;">48; 48; 48</div>
<div class="t" style="left:43.0px;top:59.2px;font-size:15px;color:#101010;">Frame Rate</div>
<div class="t" style="left:173.5px;top:59.2px;font-size:15px;color:#101010;">30</div>
<div class="t" style="left:43.0px;top:78.2px;font-size:15px;color:#101010;">Default Light</div>
<div class="a" style="left:173.0px;top:79.3px;width:14.0px;height:13.5px;background:#fff;border:1px solid #b4b0ab;border-radius:2px"></div>
<svg class="a" style="left:175.0px;top:80.8px" width="10" height="11" viewBox="0 0 10 11"><path d="M1.5 5.5 L4.2 9.5 L8.8 1" stroke="#101010" stroke-width="1.6" fill="none"/></svg>
<svg class="a" style="left:5.0px;top:101.8px" width="10" height="6" viewBox="0 0 10 6"><path d="M0.5 0.5 H9.5 L5 5.5Z" fill="#404040"/></svg>
<svg class="a" style="left:23.0px;top:96.8px" width="15" height="14" viewBox="0 0 15 14"><path d="M1.5 8.5 Q3.5 9.5 5 12.5 Q8 6 13.5 1.5" stroke="#1a7a1a" stroke-width="1.9" fill="none" stroke-linecap="round"/></svg>
<div class="t" style="left:45.0px;top:97.2px;font-size:15px;color:#101010;">Global Status: Ok</div>
<svg class="a" style="left:43.0px;top:115.8px" width="15" height="14" viewBox="0 0 15 14"><path d="M1.5 8.5 Q3.5 9.5 5 12.5 Q8 6 13.5 1.5" stroke="#1a7a1a" stroke-width="1.9" fill="none" stroke-linecap="round"/></svg>
<div class="t" style="left:65.0px;top:116.2px;font-size:15px;color:#101010;">Fixed Frame</div>
<div class="t" style="left:173.5px;top:116.2px;font-size:15px;color:#101010;">OK</div>
<svg class="a" style="left:7.0px;top:137.8px" width="6" height="10" viewBox="0 0 6 10"><path d="M0.5 0.5 V9.5 L5.5 5Z" fill="#404040"/></svg>
<svg class="a" style="left:24.0px;top:137.8px" width="15" height="9" viewBox="0 0 15 9"><path d="M7.5 0.5 L14.5 4.5 L7.5 8.5 L0.5 4.5Z M4 2.5 L11 6.5 M11 2.5 L4 6.5" stroke="#303030" stroke-width="1.1" fill="none"/></svg>
<div class="t" style="left:45.0px;top:135.2px;font-size:15px;color:#3474c4;font-weight:bold;">Grid</div>
<div class="a" style="left:173.0px;top:136.3px;width:14.0px;height:13.5px;background:#fff;border:1px solid #b4b0ab;border-radius:2px"></div>
<svg class="a" style="left:175.0px;top:137.8px" width="10" height="11" viewBox="0 0 10 11"><path d="M1.5 5.5 L4.2 9.5 L8.8 1" stroke="#2a5ca8" stroke-width="1.6" fill="none"/></svg>
<svg class="a" style="left:5.0px;top:158.8px" width="10" height="6" viewBox="0 0 10 6"><path d="M0.5 0.5 H9.5 L5 5.5Z" fill="#404040"/></svg>
<svg class="a" style="left:23.0px;top:152.8px" width="16" height="16" viewBox="0 0 16 16"><rect x="0" y="0" width="16" height="16" fill="#e8e8e8"/><g fill="#505050"><rect x="0" y="0" width="8" height="4"/><rect x="0" y="4" width="4" height="12"/><rect x="12" y="0" width="4" height="4"/><rect x="8" y="4" width="4" height="4"/><rect x="12" y="12" width="4" height="4"/><rect x="4" y="12" width="4" height="4"/></g><g fill="#a8a8a8"><rect x="4" y="4" width="4" height="4"/><rect x="8" y="8" width="4" height="4"/><rect x="8" y="0" width="4" height="4"/></g></svg>
<div class="t" style="left:45.0px;top:154.2px;font-size:15px;color:#3474c4;font-weight:bold;">Map</div>
<div class="a" style="left:173.0px;top:155.3px;width:14.0px;height:13.5px;background:#fff;border:1px solid #b4b0ab;border-radius:2px"></div>
<svg class="a" style="left:175.0px;top:156.8px" width="10" height="11" viewBox="0 0 10 11"><path d="M1.5 5.5 L4.2 9.5 L8.8 1" stroke="#2a5ca8" stroke-width="1.6" fill="none"/></svg>
<svg class="a" style="left:27.0px;top:175.8px" width="6" height="10" viewBox="0 0 6 10"><path d="M0.5 0.5 V9.5 L5.5 5Z" fill="#404040"/></svg>
<svg class="a" style="left:43.0px;top:172.8px" width="15" height="14" viewBox="0 0 15 14"><path d="M1.5 8.5 Q3.5 9.5 5 12.5 Q8 6 13.5 1.5" stroke="#1a7a1a" stroke-width="1.9" fill="none" stroke-linecap="round"/></svg>
<div class="t" style="left:65.0px;top:173.2px;font-size:15px;color:#101010;">Status: Ok</div>
<div class="t" style="left:43.0px;top:192.2px;font-size:15px;color:#101010;">Topic</div>
<div class="t" style="left:173.5px;top:192.2px;font-size:15px;color:#101010;">/map</div>
<div class="t" style="left:43.0px;top:211.2px;font-size:15px;color:#101010;">Alpha</div>
<div class="t" style="left:173.5px;top:211.2px;font-size:15px;color:#101010;">0.7</div>
<div class="t" style="left:43.0px;top:230.2px;font-size:15px;color:#101010;">Color Scheme</div>
<div class="t" style="left:173.5px;top:230.2px;font-size:15px;color:#101010;">map</div>
<div class="t" style="left:43.0px;top:249.2px;font-size:15px;color:#101010;">Draw Behind</div>
<div class="a" style="left:173.0px;top:250.3px;width:14.0px;height:13.5px;background:#fff;border:1px solid #b4b0ab;border-radius:2px"></div>
<div class="t" style="left:43.0px;top:268.2px;font-size:15px;color:#101010;">Resolution</div>
<div class="t" style="left:173.5px;top:268.2px;font-size:15px;color:#101010;">0.05</div>
<div class="t" style="left:43.0px;top:287.2px;font-size:15px;color:#101010;">Width</div>
<div class="t" style="left:173.5px;top:287.2px;font-size:15px;color:#101010;">2048</div>
<div class="t" style="left:43.0px;top:306.2px;font-size:15px;color:#101010;">Height</div>
<div class="t" style="left:173.5px;top:306.2px;font-size:15px;color:#101010;">2048</div>
<svg class="a" style="left:27.0px;top:327.8px" width="6" height="10" viewBox="0 0 6 10"><path d="M0.5 0.5 V9.5 L5.5 5Z" fill="#404040"/></svg>
<div class="t" style="left:43.0px;top:325.2px;font-size:15px;color:#101010;">Position</div>
<div class="t" style="left:173.5px;top:325.2px;font-size:15px;color:#101010;">-51.225; -51.225; 0</div>
<svg class="a" style="left:27.0px;top:346.8px" width="6" height="10" viewBox="0 0 6 10"><path d="M0.5 0.5 V9.5 L5.5 5Z" fill="#404040"/></svg>
<div class="t" style="left:43.0px;top:344.2px;font-size:15px;color:#101010;">Orientation</div>
<div class="t" style="left:173.5px;top:344.2px;font-size:15px;color:#101010;">0; 0; 0; 1</div>
<div class="t" style="left:43.0px;top:363.2px;font-size:15px;color:#101010;">Unreliable</div>
<div class="a" style="left:173.0px;top:364.3px;width:14.0px;height:13.5px;background:#fff;border:1px solid #b4b0ab;border-radius:2px"></div>
<div class="t" style="left:43.0px;top:382.2px;font-size:15px;color:#101010;">Use Timestamp</div>
<div class="a" style="left:173.0px;top:383.3px;width:14.0px;height:13.5px;background:#fff;border:1px solid #b4b0ab;border-radius:2px"></div>
<svg class="a" style="left:5.0px;top:405.8px" width="10" height="6" viewBox="0 0 10 6"><path d="M0.5 0.5 H9.5 L5 5.5Z" fill="#404040"/></svg>
<svg class="a" style="left:23.0px;top:400.8px" width="16" height="14" viewBox="0 0 16 14"><path d="M1 12.5 C4 6 6 11 9 7 C11 4 12 2 15 1.5" stroke="#18d018" stroke-width="2.6" fill="none"/></svg>
<div class="t" style="left:45.0px;top:401.2px;font-size:15px;color:#3474c4;font-weight:bold;">Path</div>
<div class="a" style="left:173.0px;top:402.3px;width:14.0px;height:13.5px;background:#fff;border:1px solid #b4b0ab;border-radius:2px"></div>
<svg class="a" style="left:175.0px;top:403.8px" width="10" height="11" viewBox="0 0 10 11"><path d="M1.5 5.5 L4.2 9.5 L8.8 1" stroke="#2a5ca8" stroke-width="1.6" fill="none"/></svg>
<svg class="a" style="left:27.0px;top:422.8px" width="6" height="10" viewBox="0 0 6 10"><path d="M0.5 0.5 V9.5 L5.5 5Z" fill="#404040"/></svg>
<svg class="a" style="left:43.0px;top:419.8px" width="15" height="14" viewBox="0 0 15 14"><path d="M1.5 8.5 Q3.5 9.5 5 12.5 Q8 6 13.5 1.5" stroke="#1a7a1a" stroke-width="1.9" fill="none" stroke-linecap="round"/></svg>
<div class="t" style="left:65.0px;top:420.2px;font-size:15px;color:#101010;">Status: Ok</div>
<div class="t" style="left:43.0px;top:439.2px;font-size:15px;color:#101010;">Topic</div>
<div class="t" style="left:173.5px;top:439.2px;font-size:15px;color:#101010;">/trajectory</div>
<div class="t" style="left:43.0px;top:458.2px;font-size:15px;color:#101010;">Unreliable</div>
<div class="a" style="left:173.0px;top:459.3px;width:14.0px;height:13.5px;background:#fff;border:1px solid #b4b0ab;border-radius:2px"></div>
<div class="t" style="left:43.0px;top:477.2px;font-size:15px;color:#101010;">Line Style</div>
<div class="t" style="left:173.5px;top:477.2px;font-size:15px;color:#101010;">Lines</div>
<div class="t" style="left:43.0px;top:496.2px;font-size:15px;color:#101010;">Color</div>
<div class="a" style="left:176.0px;top:497.3px;width:12.5px;height:13.0px;background:#19ff00;border:1px solid #000"></div>
<div class="t" style="left:192.5px;top:496.2px;font-size:15px;color:#101010;">25; 255; 0</div>
<div class="t" style="left:43.0px;top:515.2px;font-size:15px;color:#101010;">Alpha</div>
<div class="t" style="left:173.5px;top:515.2px;font-size:15px;color:#101010;">1</div>
<div class="t" style="left:43.0px;top:534.2px;font-size:15px;color:#101010;">Buffer Length</div>
<div class="t" style="left:173.5px;top:534.2px;font-size:15px;color:#101010;">1</div>
</div>
<div class="a" style="left:160.0px;top:663.5px;width:1.0px;height:1.0px;background:#b8b4af"></div>
<div class="a" style="left:163.0px;top:663.5px;width:1.0px;height:1.0px;background:#b8b4af"></div>
<div class="a" style="left:166.0px;top:663.5px;width:1.0px;height:1.0px;background:#b8b4af"></div>
<div class="a" style="left:169.0px;top:663.5px;width:1.0px;height:1.0px;background:#b8b4af"></div>
<div class="a" style="left:172.0px;top:663.5px;width:1.0px;height:1.0px;background:#b8b4af"></div>
<div class="a" style="left:175.0px;top:663.5px;width:1.0px;height:1.0px;background:#b8b4af"></div>
<div class="a" style="left:178.0px;top:663.5px;width:1.0px;height:1.0px;background:#b8b4af"></div>
<div class="a" style="left:181.0px;top:663.5px;width:1.0px;height:1.0px;background:#b8b4af"></div>
<div class="a" style="left:0.4px;top:666.2px;width:341.3px;height:77.3px;background:#fff;border:1px solid #c2beb9"></div>
<div class="t" style="left:5.0px;top:671.9px;font-size:15px;color:#101010;font-weight:bold;">PointCloud2</div>
<div class="t" style="left:5.0px;top:706.0px;font-size:15px;color:#101010;">Displays a point cloud from a</div>
<div class="t" style="left:5.0px;top:723.1px;font-size:15px;color:#101010;">sensor_msgs::PointCloud2 message as points</div>
<div class="a" style="left:1.3999999999999773px;top:739px;width:325px;height:4px;overflow:hidden"><div class="t" style="left:3.6px;top:1px;font-size:15px;color:#101010">by the world-space points visibility and...</div></div>
<div class="a" style="left:327.0px;top:667.2px;width:14.0px;height:75.3px;background:#f3f2f0;border-left:1px solid #c8c4bf"></div>
<div class="a" style="left:330.5px;top:671.5px;width:0;height:0;border-left:4px solid transparent;border-right:4px solid transparent;border-bottom:4px solid #404040;"></div>
<div class="a" style="left:330.5px;top:733.5px;width:0;height:0;border-left:4px solid transparent;border-right:4px solid transparent;border-top:4px solid #404040;"></div>
<div class="a" style="left:328.0px;top:709.5px;width:13.0px;height:18.5px;background:#dedbd7"></div>
<div class="a" style="left:328.0px;top:680.5px;width:13.0px;height:1.0px;background:#d0ccc7"></div>
<div class="a" style="left:2.5px;top:750.6px;width:78.8px;height:24.4px;border:1px solid #b6b2ad;border-radius:3px;background:linear-gradient(#fbfaf9,#ebe9e6)"></div>
<div class="t" style="left:2.5px;top:755.3px;width:78.8px;text-align:center;font-size:15px;color:#101010">Add</div>
<div class="a" style="left:88.4px;top:750.6px;width:79.2px;height:24.4px;border:1px solid #b6b2ad;border-radius:3px;background:linear-gradient(#fbfaf9,#ebe9e6)"></div>
<div class="t" style="left:88.4px;top:755.3px;width:79.2px;text-align:center;font-size:15px;color:#101010">Duplicate</div>
<div class="a" style="left:174.4px;top:750.6px;width:79.1px;height:24.4px;border:1px solid #b6b2ad;border-radius:3px;background:linear-gradient(#fbfaf9,#ebe9e6)"></div>
<div class="t" style="left:174.4px;top:755.3px;width:79.1px;text-align:center;font-size:15px;color:#101010">Remove</div>
<div class="a" style="left:260.3px;top:750.6px;width:79.2px;height:24.4px;border:1px solid #b6b2ad;border-radius:3px;background:linear-gradient(#fbfaf9,#ebe9e6)"></div>
<div class="t" style="left:260.3px;top:755.3px;width:79.2px;text-align:center;font-size:15px;color:#101010">Rename</div>
<div class="a" style="left:364px;top:91px;width:610px;height:688px;background:#5d6d6c;overflow:hidden">
<svg width="610" height="688" viewBox="735 153 610 688" style="position:absolute;left:0;top:0"><path d="M1155.0 187.0L1341.8 551.0M1155.0 187.0L792.0 373.3M1118.7 205.6L1305.5 569.6M1173.7 223.4L810.7 409.7M1082.4 224.3L1269.2 588.3M1192.4 259.8L829.4 446.1M1046.1 242.9L1232.9 606.9M1211.0 296.2L848.0 482.5M1009.8 261.5L1196.6 625.5M1229.7 332.6L866.7 518.9M973.5 280.1L1160.3 644.1M1248.4 369.0L885.4 555.3M937.2 298.8L1124.0 662.8M1267.1 405.4L904.1 591.7M900.9 317.4L1087.7 681.4M1285.8 441.8L922.8 628.1M864.6 336.0L1051.4 700.0M1304.4 478.2L941.4 664.5M828.3 354.7L1015.1 718.7M1323.1 514.6L960.1 700.9M792.0 373.3L978.8 737.3M1341.8 551.0L978.8 737.3" stroke="#9ba4a3" stroke-width="1" fill="none" opacity="1.0"/><path d="M1155.0 470.0 L1143.0 459.0 L1062.0 287.0 L1034.0 236.0 L1002.0 240.0 L802.0 341.0 L800.0 411.0 L852.0 500.0 L894.0 567.0 L940.0 660.0 L1024.0 848.0 L1300.0 714.0" stroke="#7cc43a" stroke-width="1.3" fill="none" stroke-dasharray="1.6 1.8" opacity="0.8" stroke-linejoin="round"/><path d="M1153.7 470.8 L1141.9 459.9 L1061.8 289.8 L1034.1 239.4 L1002.4 243.4 L804.6 343.2 L802.6 412.5 L854.1 500.5 L895.6 566.8 L941.1 658.7 L1024.2 844.7 L1297.1 712.1" stroke="#a6c442" stroke-width="1.3" fill="none" stroke-dasharray="1.6 1.8" opacity="0.8" stroke-linejoin="round"/><path d="M1152.5 471.6 L1140.7 460.9 L1061.5 292.7 L1034.1 242.8 L1002.8 246.7 L807.2 345.5 L805.3 413.9 L856.1 501.0 L897.2 566.5 L942.2 657.5 L1024.4 841.3 L1294.3 710.3" stroke="#68b43a" stroke-width="1.3" fill="none" stroke-dasharray="1.6 1.8" opacity="0.8" stroke-linejoin="round"/><path d="M1151.2 472.5 L1139.6 461.8 L1061.3 295.5 L1034.2 246.2 L1003.3 250.1 L809.9 347.7 L807.9 415.4 L858.2 501.5 L898.8 566.3 L943.3 656.2 L1024.5 838.0 L1291.4 708.4" stroke="#b8b84a" stroke-width="1.3" fill="none" stroke-dasharray="1.6 1.8" opacity="0.8" stroke-linejoin="round"/><path d="M1149.9 473.3 L1138.5 462.8 L1061.0 298.4 L1034.3 249.6 L1003.7 253.4 L812.5 350.0 L810.6 416.9 L860.3 502.0 L900.4 566.0 L944.4 654.9 L1024.7 834.7 L1288.6 706.6" stroke="#86c836" stroke-width="1.3" fill="none" stroke-dasharray="1.6 1.8" opacity="0.8" stroke-linejoin="round"/><path d="M1148.7 474.1 L1137.3 463.7 L1060.8 301.2 L1034.3 253.0 L1004.1 256.8 L815.1 352.2 L813.2 418.4 L862.3 502.5 L902.0 565.8 L945.5 653.7 L1024.9 831.3 L1285.7 704.7" stroke="#98b040" stroke-width="1.3" fill="none" stroke-dasharray="1.6 1.8" opacity="0.8" stroke-linejoin="round"/><path d="M1018.3 829.7 L1296.1 709.5" stroke="#c07040" stroke-width="1.2" fill="none" stroke-dasharray="1.5 2" opacity="0.7" stroke-linejoin="round"/><path d="M1019.0 821.0 L1288.3 704.5" stroke="#b05a3a" stroke-width="1.2" fill="none" stroke-dasharray="1.5 2" opacity="0.7" stroke-linejoin="round"/><path d="M1018.7 825.3 L1292.2 707.0" stroke="#c8a040" stroke-width="1.2" fill="none" stroke-dasharray="1.5 2" opacity="0.7" stroke-linejoin="round"/><path d="M1019.3 816.7 L1284.4 702.0" stroke="#70b040" stroke-width="1.2" fill="none" stroke-dasharray="1.5 2" opacity="0.7" stroke-linejoin="round"/><path d="M1019.6 812.3 L1280.5 699.5" stroke="#b87a40" stroke-width="1.2" fill="none" stroke-dasharray="1.5 2" opacity="0.7" stroke-linejoin="round"/><path d="M1020.0 808.0 L1276.6 697.0" stroke="#a8b040" stroke-width="1.2" fill="none" stroke-dasharray="1.5 2" opacity="0.7" stroke-linejoin="round"/><path d="M1020.3 803.7 L1272.7 694.5" stroke="#c06a40" stroke-width="1.2" fill="none" stroke-dasharray="1.5 2" opacity="0.7" stroke-linejoin="round"/><path d="M1020.6 799.3 L1268.8 692.0" stroke="#88b848" stroke-width="1.2" fill="none" stroke-dasharray="1.5 2" opacity="0.7" stroke-linejoin="round"/><path d="M865.2 503.1 L904.2 565.5 L947.0 652.0 L1025.1 826.8" stroke="#c86a40" stroke-width="1.2" fill="none" stroke-dasharray="1.5 2" opacity="0.6" stroke-linejoin="round"/><path d="M867.0 503.6 L905.7 565.2 L948.0 650.8 L1025.3 823.8" stroke="#b8a040" stroke-width="1.2" fill="none" stroke-dasharray="1.5 2" opacity="0.6" stroke-linejoin="round"/><path d="M869.9 504.3 L907.9 564.9 L949.5 649.1 L1025.5 819.2" stroke="#c05a3a" stroke-width="1.2" fill="none" stroke-dasharray="1.5 2" opacity="0.6" stroke-linejoin="round"/><path d="M825.0 433.0 L845.0 470.0 L857.0 483.0 L878.0 540.0 L895.0 590.0" stroke="#d89030" stroke-width="2.2" fill="none" stroke-dasharray="2 1" opacity="0.8" stroke-linejoin="round"/><path d="M857.0 488.0 L872.0 520.0" stroke="#40d060" stroke-width="3" fill="none" stroke-dasharray="2 1" opacity="0.6" stroke-linejoin="round"/><polygon points="1016.0,269.0 1023.0,268.0 1051.0,280.0 1059.0,286.0 1062.0,305.0 1073.0,319.0 1087.0,342.0 1091.0,355.0 1107.0,380.0 1118.0,400.0 1129.0,422.0 1137.0,444.0 1137.0,453.0 1098.0,458.0 1087.0,466.0 1087.0,468.0 1202.0,503.0 1187.0,514.0 1110.0,484.0 1104.0,492.0 1143.0,527.0 1177.0,550.0 1220.0,597.0 1225.0,610.0 1240.0,637.0 1262.0,675.0 1253.0,691.0 1210.0,713.0 1194.0,681.0 1170.0,692.0 1167.0,696.0 1160.0,675.0 1142.0,672.0 1142.0,687.0 1149.0,704.0 1137.0,710.0 1143.0,731.0 1130.0,736.0 1134.0,755.0 1114.0,764.0 1108.0,725.0 1069.0,750.0 1071.0,768.0 1060.0,767.0 1054.0,752.0 1050.0,753.0 1044.0,764.0 1040.0,771.0 1037.0,790.0 1026.0,786.0 1020.0,796.0 1024.0,756.0 1019.0,740.0 1007.0,737.0 987.0,720.0 967.0,667.0 970.0,664.0 987.0,617.0 1009.0,572.0 1021.0,544.0 1022.0,537.0 1001.0,499.0 991.0,495.0 976.0,473.0 874.0,487.0 871.0,487.0 861.0,464.0 848.0,458.0 852.0,455.0 871.0,450.0 865.0,439.0 847.0,433.0 877.0,420.0 979.0,364.0 982.0,368.0 1031.0,422.0 1040.0,413.0 1005.0,349.0 1032.0,337.0 1023.0,298.0" fill="#c3c3c3"/><polygon points="830,431.7 846.8,433 848,437 830,436" fill="#c3c3c3"/><path d="M880.0 495.0 L972.0 482.0" stroke="#c4c8c8" stroke-width="1.6" fill="none" opacity="0.85" stroke-dasharray="5 1.5 3 1" stroke-linejoin="round"/><path d="M880.0 497.6 L976.0 484.3" stroke="#c4c8c8" stroke-width="1.6" fill="none" opacity="0.85" stroke-dasharray="5 1.5 3 1" stroke-linejoin="round"/><path d="M880.0 500.2 L980.0 486.6" stroke="#c4c8c8" stroke-width="1.6" fill="none" opacity="0.85" stroke-dasharray="5 1.5 3 1" stroke-linejoin="round"/><path d="M880.0 502.8 L984.0 488.9" stroke="#c4c8c8" stroke-width="1.6" fill="none" opacity="0.85" stroke-dasharray="5 1.5 3 1" stroke-linejoin="round"/><path d="M885.0 525.0 L966.0 497.0" stroke="#c4c8c8" stroke-width="1.5" fill="none" opacity="0.8" stroke-dasharray="4 1.5 6 1" stroke-linejoin="round"/><path d="M885.0 527.4 L966.0 499.2" stroke="#c4c8c8" stroke-width="1.5" fill="none" opacity="0.8" stroke-dasharray="4 1.5 6 1" stroke-linejoin="round"/><path d="M885.0 529.8 L966.0 501.4" stroke="#c4c8c8" stroke-width="1.5" fill="none" opacity="0.8" stroke-dasharray="4 1.5 6 1" stroke-linejoin="round"/><polygon points="906.5,534 985.5,495 998.5,503 910.4,544.4" fill="#c3c3c3"/><path d="M917.0 614.0 L1000.0 533.0" stroke="#c4c8c8" stroke-width="2" fill="none" opacity="0.9" stroke-dasharray="2 1" stroke-linejoin="round"/><path d="M953.0 633.0 L1020.0 547.0" stroke="#c4c8c8" stroke-width="2" fill="none" opacity="0.9" stroke-dasharray="2 1" stroke-linejoin="round"/><path d="M975.0 562.0 L1010.0 535.0" stroke="#c0c4c4" stroke-width="6" fill="none" opacity="0.5" stroke-dasharray="3 2" stroke-linejoin="round"/><path d="M960.0 600.0 L1000.0 555.0" stroke="#c0c4c4" stroke-width="4" fill="none" opacity="0.4" stroke-dasharray="3 2" stroke-linejoin="round"/><path d="M1159.6 685.0 L1165.6 697.0" stroke="#c8cccc" stroke-width="1.6" fill="none" opacity="0.95" stroke-dasharray="2 1" stroke-linejoin="round"/><path d="M1173.0 695.6 L1177.4 714.8" stroke="#c8cccc" stroke-width="1.6" fill="none" opacity="0.95" stroke-dasharray="2 1" stroke-linejoin="round"/><path d="M1180.4 689.6 L1189.3 711.9" stroke="#c8cccc" stroke-width="1.6" fill="none" opacity="0.95" stroke-dasharray="2 1" stroke-linejoin="round"/><path d="M1187.8 683.7 L1199.6 719.3" stroke="#c8cccc" stroke-width="1.6" fill="none" opacity="0.95" stroke-dasharray="2 1" stroke-linejoin="round"/><path d="M1192.2 682.2 L1205.6 716.3" stroke="#c8cccc" stroke-width="1.6" fill="none" opacity="0.95" stroke-dasharray="2 1" stroke-linejoin="round"/><path d="M1138.9 710.4 L1152.2 747.4" stroke="#c8cccc" stroke-width="1.6" fill="none" opacity="0.95" stroke-dasharray="2 1" stroke-linejoin="round"/><path d="M1143.3 708.9 L1158.1 743.0" stroke="#c8cccc" stroke-width="1.6" fill="none" opacity="0.95" stroke-dasharray="2 1" stroke-linejoin="round"/><path d="M1131.5 735.6 L1138.9 751.9" stroke="#c8cccc" stroke-width="1.6" fill="none" opacity="0.95" stroke-dasharray="2 1" stroke-linejoin="round"/><path d="M1098.9 735.6 L1103.3 771.1" stroke="#c8cccc" stroke-width="1.6" fill="none" opacity="0.95" stroke-dasharray="2 1" stroke-linejoin="round"/><path d="M1104.8 731.1 L1110.7 766.7" stroke="#c8cccc" stroke-width="1.6" fill="none" opacity="0.95" stroke-dasharray="2 1" stroke-linejoin="round"/><path d="M1075.2 751.9 L1076.7 783.0" stroke="#c8cccc" stroke-width="1.6" fill="none" opacity="0.95" stroke-dasharray="2 1" stroke-linejoin="round"/><path d="M1048.5 754.8 L1058.9 774.0" stroke="#c8cccc" stroke-width="1.6" fill="none" opacity="0.95" stroke-dasharray="2 1" stroke-linejoin="round"/><path d="M1041.1 772.6 L1042.6 799.3" stroke="#c8cccc" stroke-width="1.6" fill="none" opacity="0.95" stroke-dasharray="2 1" stroke-linejoin="round"/><path d="M1021.0 770.0 L1022.0 797.0" stroke="#c8cccc" stroke-width="1.6" fill="none" opacity="0.95" stroke-dasharray="2 1" stroke-linejoin="round"/><path d="M847.0 433.0 L877.0 420.0 L979.0 364.0" stroke="#101010" stroke-width="2" fill="none" opacity="1.0" stroke-linejoin="round"/><path d="M1005.0 349.0 L1032.0 337.0" stroke="#101010" stroke-width="2" fill="none" opacity="1.0" stroke-linejoin="round"/><path d="M1023.0 268.0 L1051.0 280.0" stroke="#101010" stroke-width="2" fill="none" opacity="1.0" stroke-linejoin="round"/><path d="M1047.0 308.0 L1062.0 333.0" stroke="#101010" stroke-width="1.5" fill="none" opacity="1.0" stroke-linejoin="round"/><path d="M1031.0 422.0 L1040.0 413.0" stroke="#101010" stroke-width="2" fill="none" opacity="1.0" stroke-linejoin="round"/><path d="M976.0 473.0 L991.0 495.0" stroke="#101010" stroke-width="1.5" fill="none" opacity="1" stroke-dasharray="2 1" stroke-linejoin="round"/><path d="M1001.0 499.0 L1022.0 537.0" stroke="#101010" stroke-width="1.5" fill="none" opacity="1.0" stroke-linejoin="round"/><path d="M847.0 433.0 L865.0 439.0 L871.0 450.0" stroke="#101010" stroke-width="1.5" fill="none" opacity="1" stroke-dasharray="2 1" stroke-linejoin="round"/><path d="M848.0 458.0 L861.0 464.0 L871.0 487.0" stroke="#101010" stroke-width="1.5" fill="none" opacity="1" stroke-dasharray="2 1" stroke-linejoin="round"/><path d="M1262.0 675.0 L1253.0 691.0 L1210.0 713.0" stroke="#101010" stroke-width="1.4" fill="none" opacity="1" stroke-dasharray="2 1" stroke-linejoin="round"/><path d="M1194.0 681.0 L1170.0 692.0" stroke="#101010" stroke-width="1.4" fill="none" opacity="1" stroke-dasharray="2 1" stroke-linejoin="round"/><path d="M1142.0 672.0 L1160.0 675.0" stroke="#101010" stroke-width="1.6" fill="none" opacity="1" stroke-dasharray="2 1" stroke-linejoin="round"/><path d="M1142.0 672.0 L1142.0 687.0" stroke="#101010" stroke-width="1.4" fill="none" opacity="1" stroke-dasharray="2 1" stroke-linejoin="round"/><path d="M1137.0 710.0 L1149.0 704.0" stroke="#101010" stroke-width="1.4" fill="none" opacity="1" stroke-dasharray="2 1" stroke-linejoin="round"/><path d="M1130.0 736.0 L1143.0 731.0" stroke="#101010" stroke-width="1.4" fill="none" opacity="1" stroke-dasharray="2 1" stroke-linejoin="round"/><path d="M1134.0 755.0 L1114.0 764.0" stroke="#101010" stroke-width="1.4" fill="none" opacity="1" stroke-dasharray="2 1" stroke-linejoin="round"/><path d="M1108.0 725.0 L1069.0 750.0" stroke="#101010" stroke-width="1.4" fill="none" opacity="1" stroke-dasharray="2 1" stroke-linejoin="round"/><path d="M1071.0 768.0 L1060.0 767.0" stroke="#101010" stroke-width="1.4" fill="none" opacity="1" stroke-dasharray="2 1" stroke-linejoin="round"/><path d="M1054.0 752.0 L1050.0 753.0 L1044.0 764.0" stroke="#101010" stroke-width="1.4" fill="none" opacity="1" stroke-dasharray="2 1" stroke-linejoin="round"/><path d="M1037.0 790.0 L1026.0 786.0 L1020.0 796.0" stroke="#101010" stroke-width="1.4" fill="none" opacity="1" stroke-dasharray="2 1" stroke-linejoin="round"/><path d="M1019.0 740.0 L1024.0 756.0" stroke="#101010" stroke-width="1.4" fill="none" opacity="1" stroke-dasharray="2 1" stroke-linejoin="round"/><path d="M1173.0 563.0 L1223.0 607.0 L1240.0 637.0 L1262.0 675.0" stroke="#101010" stroke-width="1.4" fill="none" opacity="1" stroke-dasharray="2 2" stroke-linejoin="round"/><path d="M1087.0 342.0 L1107.0 380.0 L1118.0 400.0 L1137.0 444.0" stroke="#101010" stroke-width="1.2" fill="none" opacity="1" stroke-dasharray="2 3" stroke-linejoin="round"/><path d="M1007.0 737.0 L987.0 720.0 L967.0 667.0" stroke="#101010" stroke-width="1.0" fill="none" opacity="1" stroke-dasharray="2 3" stroke-linejoin="round"/><path d="M1087.0 466.0 L1098.0 458.0" stroke="#101010" stroke-width="2" fill="none" opacity="1" stroke-dasharray="2 1" stroke-linejoin="round"/><path d="M1110.0 484.0 L1104.0 492.0" stroke="#101010" stroke-width="2" fill="none" opacity="1" stroke-dasharray="2 1" stroke-linejoin="round"/><path d="M1070.0 344.0 L1080.0 362.0 L1096.0 389.0" stroke="#101010" stroke-width="1.8" fill="none" opacity="1" stroke-dasharray="1.5 2.5" stroke-linejoin="round"/><path d="M1076.0 340.0 L1090.0 366.0 L1100.0 384.0" stroke="#101010" stroke-width="1.2" fill="none" opacity="0.8" stroke-dasharray="1 4" stroke-linejoin="round"/><path d="M852.0 419.0 L920.0 388.0 L977.0 355.0" stroke="#c05a48" stroke-width="1.2" fill="none" opacity="0.5" stroke-dasharray="2 3" stroke-linejoin="round"/><path d="M901.0 388.0 L960.0 360.0 L1018.0 331.0" stroke="#c05a48" stroke-width="1.2" fill="none" opacity="0.4" stroke-dasharray="2 3" stroke-linejoin="round"/><rect x="874" y="487" width="1.6" height="1.6" fill="#202020"/><rect x="880" y="490" width="1.6" height="1.6" fill="#202020"/><rect x="905" y="485" width="1.6" height="1.6" fill="#202020"/><rect x="925" y="458" width="1.6" height="1.6" fill="#202020"/><rect x="940" y="462" width="1.6" height="1.6" fill="#202020"/><rect x="985" y="462" width="1.6" height="1.6" fill="#202020"/><rect x="1040" y="355" width="1.6" height="1.6" fill="#202020"/><rect x="1060" y="330" width="1.6" height="1.6" fill="#202020"/><rect x="1078" y="345" width="1.6" height="1.6" fill="#202020"/><rect x="1085" y="350" width="1.6" height="1.6" fill="#202020"/><rect x="1040" y="300" width="1.6" height="1.6" fill="#202020"/><rect x="1050" y="310" width="1.6" height="1.6" fill="#202020"/><rect x="1044" y="290" width="1.6" height="1.6" fill="#202020"/><rect x="1070" y="425" width="1.6" height="1.6" fill="#202020"/><rect x="1080" y="430" width="1.6" height="1.6" fill="#202020"/><rect x="1110" y="410" width="1.6" height="1.6" fill="#202020"/><rect x="1176" y="710" width="1.6" height="1.6" fill="#202020"/><rect x="1203" y="715" width="1.6" height="1.6" fill="#202020"/><rect x="1120" y="540" width="1.6" height="1.6" fill="#202020"/><rect x="1150" y="560" width="1.6" height="1.6" fill="#202020"/><rect x="1160" y="570" width="1.6" height="1.6" fill="#202020"/><rect x="1000" y="600" width="1.6" height="1.6" fill="#202020"/><rect x="985" y="650" width="1.6" height="1.6" fill="#202020"/><rect x="980" y="680" width="1.6" height="1.6" fill="#202020"/><rect x="1045" y="690" width="1.6" height="1.6" fill="#202020"/><rect x="1055" y="700" width="1.6" height="1.6" fill="#202020"/><rect x="918" y="560" width="1.6" height="1.6" fill="#202020"/><rect x="950" y="535" width="1.6" height="1.6" fill="#202020"/><clipPath id="mclip"><polygon points="1016.0,269.0 1023.0,268.0 1051.0,280.0 1059.0,286.0 1062.0,305.0 1073.0,319.0 1087.0,342.0 1091.0,355.0 1107.0,380.0 1118.0,400.0 1129.0,422.0 1137.0,444.0 1137.0,453.0 1098.0,458.0 1087.0,466.0 1087.0,468.0 1202.0,503.0 1187.0,514.0 1110.0,484.0 1104.0,492.0 1143.0,527.0 1177.0,550.0 1220.0,597.0 1225.0,610.0 1240.0,637.0 1262.0,675.0 1253.0,691.0 1210.0,713.0 1194.0,681.0 1170.0,692.0 1167.0,696.0 1160.0,675.0 1142.0,672.0 1142.0,687.0 1149.0,704.0 1137.0,710.0 1143.0,731.0 1130.0,736.0 1134.0,755.0 1114.0,764.0 1108.0,725.0 1069.0,750.0 1071.0,768.0 1060.0,767.0 1054.0,752.0 1050.0,753.0 1044.0,764.0 1040.0,771.0 1037.0,790.0 1026.0,786.0 1020.0,796.0 1024.0,756.0 1019.0,740.0 1007.0,737.0 987.0,720.0 967.0,667.0 970.0,664.0 987.0,617.0 1009.0,572.0 1021.0,544.0 1022.0,537.0 1001.0,499.0 991.0,495.0 976.0,473.0 874.0,487.0 871.0,487.0 861.0,464.0 848.0,458.0 852.0,455.0 871.0,450.0 865.0,439.0 847.0,433.0 877.0,420.0 979.0,364.0 982.0,368.0 1031.0,422.0 1040.0,413.0 1005.0,349.0 1032.0,337.0 1023.0,298.0"/></clipPath><g clip-path="url(#mclip)"><path d="M1155.0 187.0L1341.8 551.0M1155.0 187.0L792.0 373.3M1118.7 205.6L1305.5 569.6M1173.7 223.4L810.7 409.7M1082.4 224.3L1269.2 588.3M1192.4 259.8L829.4 446.1M1046.1 242.9L1232.9 606.9M1211.0 296.2L848.0 482.5M1009.8 261.5L1196.6 625.5M1229.7 332.6L866.7 518.9M973.5 280.1L1160.3 644.1M1248.4 369.0L885.4 555.3M937.2 298.8L1124.0 662.8M1267.1 405.4L904.1 591.7M900.9 317.4L1087.7 681.4M1285.8 441.8L922.8 628.1M864.6 336.0L1051.4 700.0M1304.4 478.2L941.4 664.5M828.3 354.7L1015.1 718.7M1323.1 514.6L960.1 700.9M792.0 373.3L978.8 737.3M1341.8 551.0L978.8 737.3" stroke="#a4a4a4" stroke-width="1" fill="none" opacity="1.0"/></g><path d="M1065.0 296.0 L1090.0 345.0 L1112.0 390.0" stroke="#e05a20" stroke-width="3" fill="none" opacity="0.9" stroke-dasharray="2 1" stroke-linejoin="round"/><path d="M1072.0 290.0 L1098.0 340.0" stroke="#d0c040" stroke-width="2" fill="none" opacity="0.6" stroke-dasharray="2 2" stroke-linejoin="round"/><path d="M1112.0 390.0 L1130.0 425.0 L1142.0 455.0" stroke="#e8c020" stroke-width="3.5" fill="none" opacity="1.0" stroke-linejoin="round"/><path d="M1119.0 405.0 L1132.0 432.0" stroke="#30a0e0" stroke-width="2" fill="none" opacity="1.0" stroke-linejoin="round"/><path d="M1140.0 447.0 L1152.0 468.0" stroke="#30e040" stroke-width="4.5" fill="none" opacity="1.0" stroke-linejoin="round"/><path d="M1117.0 396.0 L1123.0 408.0" stroke="#30e040" stroke-width="4" fill="none" opacity="1.0" stroke-linejoin="round"/><path d="M1198.0 508.0 L1228.0 483.0" stroke="#e05020" stroke-width="4" fill="none" opacity="0.85" stroke-dasharray="2 1" stroke-linejoin="round"/><path d="M1181.0 520.0 L1206.0 508.0" stroke="#80e030" stroke-width="3" fill="none" opacity="1.0" stroke-linejoin="round"/><path d="M1181.0 522.0 L1200.0 560.0 L1226.0 610.0 L1262.0 680.0" stroke="#d0c030" stroke-width="3" fill="none" opacity="0.8" stroke-dasharray="2 1" stroke-linejoin="round"/><path d="M1190.0 540.0 L1215.0 590.0 L1240.0 640.0" stroke="#d04028" stroke-width="2" fill="none" opacity="0.6" stroke-dasharray="2 1" stroke-linejoin="round"/><path d="M930.0 550.0 L945.0 582.0" stroke="#e0e020" stroke-width="3" fill="none" opacity="1.0" stroke-linejoin="round"/><path d="M912.0 560.0 L925.0 598.0" stroke="#80c030" stroke-width="2.5" fill="none" opacity="0.8" stroke-dasharray="2 1" stroke-linejoin="round"/><path d="M1038.0 226.0 L1044.0 246.0" stroke="#c8a040" stroke-width="3" fill="none" opacity="0.6" stroke-dasharray="2 1" stroke-linejoin="round"/><g fill="none" stroke="#e8b8a0" stroke-width="1" stroke-dasharray="2 3" opacity="0.55"><path d="M980 620 Q1060 600 1130 570"/><path d="M960 700 Q1060 690 1180 650"/><path d="M1000 760 Q1100 740 1230 690"/><path d="M1040 330 Q1060 320 1080 330"/><path d="M875 480 Q900 420 940 400"/><path d="M1050 430 Q1045 440 1048 445"/></g><path d="M1048.0 440.0 L1055.0 430.0" stroke="#f0e8d8" stroke-width="2" fill="none" opacity="0.8" stroke-linejoin="round"/><circle cx="1067" cy="461" r="12" fill="#e89090" opacity="0.35"/><path d="M1067.0 461.0 L1102.5 444.0" stroke="#10e010" stroke-width="4.4" fill="none" opacity="1.0" stroke-linejoin="round"/><path d="M1067.0 461.0 L1084.4 497.0" stroke="#e01010" stroke-width="4.4" fill="none" opacity="1.0" stroke-linejoin="round"/><circle cx="1067" cy="461" r="3" fill="#1010e0"/></svg>
</div>
<svg class="a" style="left:352.0px;top:429.0px" width="6" height="10" viewBox="0 0 6 10"><path d="M5.5 0.5 V9.5 L0.5 5Z" fill="#303030"/></svg>
<svg class="a" style="left:979.0px;top:429.0px" width="6" height="10" viewBox="0 0 6 10"><path d="M0.5 0.5 V9.5 L5.5 5Z" fill="#303030"/></svg>
<div class="a" style="left:996.0px;top:91.0px;width:271.0px;height:22.0px;background:#bcb8b3"></div>
<svg class="a" style="left:999.0px;top:96.0px" width="18" height="12" viewBox="0 0 18 12"><path d="M0.5 1.5 L5 6 L0.5 10.5Z" fill="#404040"/><rect x="5" y="1.5" width="12" height="9" rx="4" fill="#404040"/></svg>
<div class="t" style="left:1022.4px;top:95.1px;font-size:15px;color:#101010;">Views</div>
<div class="a" style="left:1247.6px;top:93.5px;width:16.4px;height:16.0px;border:1px solid #9d9994;border-radius:3px;background:linear-gradient(#ffffff,#ecebe9)"></div>
<svg class="a" style="left:1251.5px;top:97.5px" width="9" height="9" viewBox="0 0 9 9"><path d="M1.5 1.5 L7.5 7.5 M7.5 1.5 L1.5 7.5" stroke="#555" stroke-width="2.4"/></svg>
<div class="t" style="left:999.0px;top:123.8px;font-size:15px;color:#101010;">Type:</div>
<div class="a" style="left:1041.0px;top:119.4px;width:137.0px;height:24.1px;border:1px solid #b6b2ad;border-radius:3px;background:linear-gradient(#fbfaf9,#ebe9e6)"></div>
<div class="t" style="left:1046.0px;top:123.8px;font-size:15px;color:#101010;">XYOrbit (rviz)</div>
<div class="a" style="left:1163.5px;top:130.5px;width:0;height:0;border-left:4px solid transparent;border-right:4px solid transparent;border-top:4px solid #303030;"></div>
<div class="a" style="left:1185.0px;top:119.8px;width:79.5px;height:23.7px;border:1px solid #b6b2ad;border-radius:3px;background:linear-gradient(#fbfaf9,#ebe9e6)"></div>
<div class="t" style="left:1185.0px;top:124.2px;width:79.5px;text-align:center;font-size:15px;color:#101010">Zero</div>
<div class="a" style="left:996.5px;top:152.6px;width:270.5px;height:592.4px;background:#fff;border:1px solid #c2beb9;border-right:none"></div>
<div class="a" style="left:1130.5px;top:153.6px;width:1.0px;height:590.4px;background:#dcd9d5"></div>
<svg class="a" style="left:1002.0px;top:158.8px" width="10" height="6" viewBox="0 0 10 6"><path d="M0.5 0.5 H9.5 L5 5.5Z" fill="#404040"/></svg>
<div class="t" style="left:1020.6px;top:154.1px;font-size:15px;color:#101010;font-weight:bold;">Current View</div>
<div class="t" style="left:1134.5px;top:154.1px;font-size:15px;color:#101010;font-weight:bold;">XYOrbit (rviz)</div>
<div class="t" style="left:1040.6px;top:171.1px;font-size:15px;color:#101010;">Near Clip ...</div>
<div class="t" style="left:1134.5px;top:171.1px;font-size:15px;color:#101010;">0.01</div>
<div class="t" style="left:1040.6px;top:188.1px;font-size:15px;color:#101010;">Invert Z Axis</div>
<div class="a" style="left:1134.0px;top:189.3px;width:14.0px;height:13.0px;background:#fff;border:1px solid #b4b0ab;border-radius:2px"></div>
<div class="t" style="left:1040.6px;top:205.1px;font-size:15px;color:#101010;">Target Fra...</div>
<div class="t" style="left:1134.5px;top:205.1px;font-size:15px;color:#101010;">&lt;Fixed Frame&gt;</div>
<div class="t" style="left:1040.6px;top:222.1px;font-size:15px;color:#101010;">Distance</div>
<div class="t" style="left:1134.5px;top:222.1px;font-size:15px;color:#101010;">20.2622</div>
<div class="t" style="left:1040.6px;top:239.1px;font-size:15px;color:#101010;">Focal Shap...</div>
<div class="t" style="left:1134.5px;top:239.1px;font-size:15px;color:#101010;">0.05</div>
<div class="t" style="left:1040.6px;top:256.1px;font-size:15px;color:#101010;">Focal Shap...</div>
<div class="a" style="left:1134.0px;top:257.3px;width:14.0px;height:13.0px;background:#fff;border:1px solid #b4b0ab;border-radius:2px"></div>
<svg class="a" style="left:1136.0px;top:258.8px" width="10" height="11" viewBox="0 0 10 11"><path d="M1.5 5.5 L4.2 9.5 L8.8 1" stroke="#101010" stroke-width="1.6" fill="none"/></svg>
<div class="t" style="left:1040.6px;top:273.1px;font-size:15px;color:#101010;">Yaw</div>
<div class="t" style="left:1134.5px;top:273.1px;font-size:15px;color:#101010;">5.80858</div>
<div class="t" style="left:1040.6px;top:290.1px;font-size:15px;color:#101010;">Pitch</div>
<div class="t" style="left:1134.5px;top:290.1px;font-size:15px;color:#101010;">1.5698</div>
<svg class="a" style="left:1024.0px;top:309.8px" width="6" height="10" viewBox="0 0 6 10"><path d="M0.5 0.5 V9.5 L5.5 5Z" fill="#404040"/></svg>
<div class="t" style="left:1040.6px;top:307.1px;font-size:15px;color:#101010;">Focal Point</div>
<div class="t" style="left:1134.5px;top:307.1px;font-size:15px;color:#101010;">4.058; -2.8058; 0</div>
<div class="a" style="left:998.0px;top:752.0px;width:84.5px;height:25.0px;border:1px solid #b6b2ad;border-radius:3px;background:linear-gradient(#fbfaf9,#ebe9e6)"></div>
<div class="t" style="left:998.0px;top:757.0px;width:84.5px;text-align:center;font-size:15px;color:#101010">Save</div>
<div class="a" style="left:1089.0px;top:752.0px;width:84.5px;height:25.0px;border:1px solid #b6b2ad;border-radius:3px;background:linear-gradient(#fbfaf9,#ebe9e6)"></div>
<div class="t" style="left:1089.0px;top:757.0px;width:84.5px;text-align:center;font-size:15px;color:#101010">Remove</div>
<div class="a" style="left:1180.0px;top:752.0px;width:84.0px;height:25.0px;border:1px solid #b6b2ad;border-radius:3px;background:linear-gradient(#fbfaf9,#ebe9e6)"></div>
<div class="t" style="left:1180.0px;top:757.0px;width:84.0px;text-align:center;font-size:15px;color:#101010">Rename</div>
<div class="a" style="left:627.0px;top:780.5px;width:1.0px;height:1.0px;background:#b8b4af"></div>
<div class="a" style="left:630.0px;top:780.5px;width:1.0px;height:1.0px;background:#b8b4af"></div>
<div class="a" style="left:633.0px;top:780.5px;width:1.0px;height:1.0px;background:#b8b4af"></div>
<div class="a" style="left:636.0px;top:780.5px;width:1.0px;height:1.0px;background:#b8b4af"></div>
<div class="a" style="left:639.0px;top:780.5px;width:1.0px;height:1.0px;background:#b8b4af"></div>
<div class="a" style="left:642.0px;top:780.5px;width:1.0px;height:1.0px;background:#b8b4af"></div>
<div class="a" style="left:0.0px;top:785.0px;width:1267.0px;height:22.0px;background:#bcb8b3"></div>
<svg class="a" style="left:4.0px;top:788.0px" width="16" height="16" viewBox="0 0 16 16"><circle cx="8" cy="8" r="6.8" fill="#fff" stroke="#303030" stroke-width="1.6"/><path d="M7.5 3.5 V8.5 H11" stroke="#303030" stroke-width="1.4" fill="none"/></svg>
<div class="t" style="left:26.4px;top:789.1px;font-size:15px;color:#101010;">Time</div>
<div class="a" style="left:1247.6px;top:787.5px;width:16.4px;height:16.0px;border:1px solid #9d9994;border-radius:3px;background:linear-gradient(#ffffff,#ecebe9)"></div>
<svg class="a" style="left:1251.5px;top:791.5px" width="9" height="9" viewBox="0 0 9 9"><path d="M1.5 1.5 L7.5 7.5 M7.5 1.5 L1.5 7.5" stroke="#555" stroke-width="2.4"/></svg>
<div class="t" style="left:11.5px;top:819.6px;font-size:15px;color:#101010;letter-spacing:-0.3px;">ROS Time:</div>
<div class="t" style="left:235.5px;top:819.6px;font-size:15px;color:#101010;letter-spacing:-0.5px;">ROS Elapsed:</div>
<div class="t" style="left:479.0px;top:819.6px;font-size:15px;color:#101010;letter-spacing:0px;">Wall Time:</div>
<div class="t" style="left:704.0px;top:819.6px;font-size:15px;color:#101010;letter-spacing:-0.1px;">Wall Elapsed:</div>
<div class="a" style="left:87.5px;top:814.7px;width:140.5px;height:23.6px;background:#fff;border:1px solid #b8b4af;border-radius:2px"></div>
<div class="t" style="left:91.5px;top:818.8px;font-size:15px;color:#101010;">1632966886.53</div>
<div class="a" style="left:331.5px;top:814.7px;width:141.0px;height:23.6px;background:#fff;border:1px solid #b8b4af;border-radius:2px"></div>
<div class="t" style="left:335.5px;top:818.8px;font-size:15px;color:#101010;">353.38</div>
<div class="a" style="left:556.5px;top:814.7px;width:141.0px;height:23.6px;background:#fff;border:1px solid #b8b4af;border-radius:2px"></div>
<div class="t" style="left:560.5px;top:818.8px;font-size:15px;color:#101010;">1632966886.56</div>
<div class="a" style="left:800.0px;top:814.7px;width:141.5px;height:23.6px;background:#fff;border:1px solid #b8b4af;border-radius:2px"></div>
<div class="t" style="left:804.0px;top:818.8px;font-size:15px;color:#101010;">353.35</div>
<div class="a" style="left:1140.0px;top:820.5px;width:14.0px;height:14.0px;background:#fff;border:1px solid #b4b0ab;border-radius:2px"></div>
<div class="t" style="left:1159.5px;top:819.8px;font-size:15px;color:#101010;">Experimental</div>
<div class="a" style="left:2.5px;top:850.5px;width:52.0px;height:23.5px;border:1px solid #b6b2ad;border-radius:3px;background:linear-gradient(#fbfaf9,#ebe9e6)"></div>
<div class="t" style="left:10.0px;top:854.8px;font-size:15px;color:#101010;">Reset</div>
<div class="t" style="left:61.5px;top:853.8px;font-size:15px;color:#101010;"><b>Left-Click:</b> Rotate. <b>Middle-Click:</b> Move X/Y. <b>Right-Click:</b>: Move Z. <b>Shift</b>: More options.</div>
<div class="t" style="left:1201.5px;top:851.3px;font-size:15px;color:#101010;">31 fps</div>
<div class="a" style="left:1262.0px;top:871.0px;width:1.0px;height:1.0px;background:#b0aca7"></div>
<div class="a" style="left:1259.0px;top:871.0px;width:1.0px;height:1.0px;background:#b0aca7"></div>
<div class="a" style="left:1262.0px;top:868.0px;width:1.0px;height:1.0px;background:#b0aca7"></div>
<div class="a" style="left:1256.0px;top:871.0px;width:1.0px;height:1.0px;background:#b0aca7"></div>
<div class="a" style="left:1259.0px;top:868.0px;width:1.0px;height:1.0px;background:#b0aca7"></div>
<div class="a" style="left:1262.0px;top:865.0px;width:1.0px;height:1.0px;background:#b0aca7"></div>
</div>
<div class="cbtn" style="left:1575.5px;top:68.5px;background:#5a5853"></div>
<div class="cbtn" style="left:1595.5px;top:68.5px;background:#5a5853"></div>
<div class="cbtn" style="left:1615.5px;top:68.5px;background:#e9541f"></div>
<svg class="a" style="left:1574px;top:68px" width="60" height="18"><path d="M6 9h8" stroke="#3a3935" stroke-width="1.3"/><rect x="26" y="5" width="8" height="8" fill="none" stroke="#3a3935" stroke-width="1.3"/><path d="M46 5l8 8M54 5l-8 8" stroke="#2a1a10" stroke-width="1.4"/></svg>
</body></html>
